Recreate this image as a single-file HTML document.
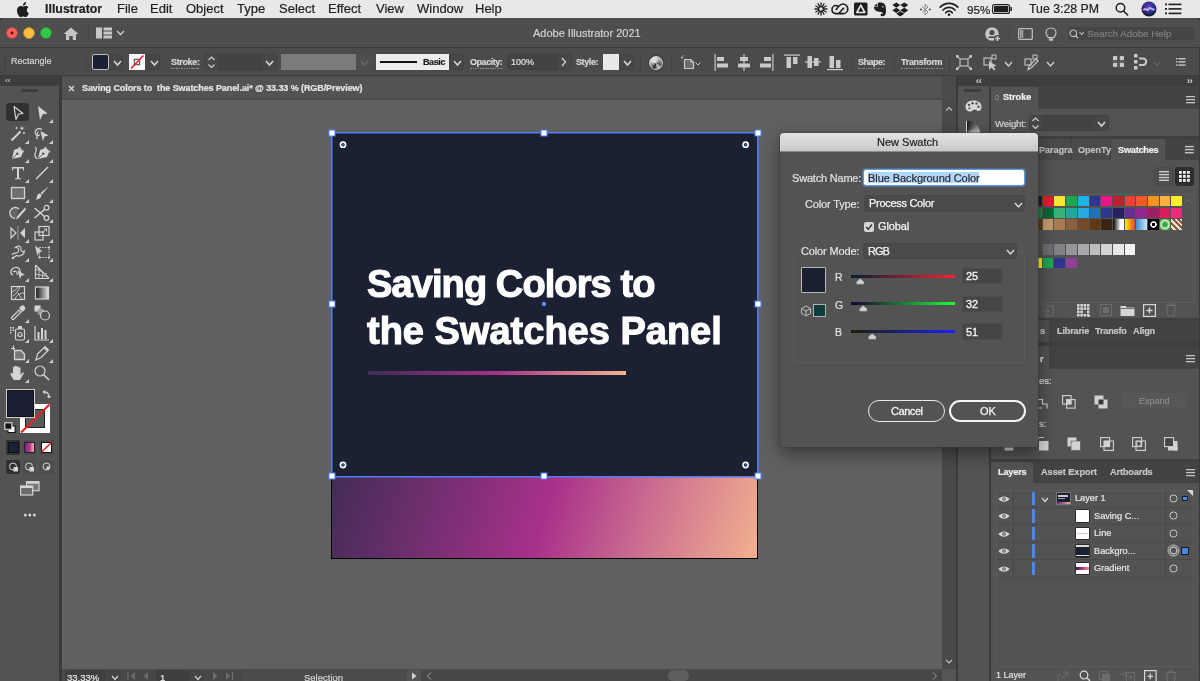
<!DOCTYPE html>
<html><head><meta charset="utf-8">
<style>
*{margin:0;padding:0;box-sizing:border-box}
html,body{width:1200px;height:681px;overflow:hidden;background:#3a3a3a;font-family:"Liberation Sans",sans-serif}
.a{position:absolute}
svg.a{overflow:visible}
.t{position:absolute;white-space:nowrap;line-height:1;will-change:transform;-webkit-text-stroke-width:0.2px}
</style></head><body>
<div class="a" style="left:0px;top:0px;width:1200px;height:18px;background:#e9e8e6;"></div>
<div class="a" style="left:0px;top:18px;width:1200px;height:29px;background:#4e4e4e;border-radius:5px 5px 0 0"></div>
<div class="a" style="left:0px;top:47px;width:1200px;height:1.5px;background:#3b3b3b;"></div>
<div class="a" style="left:0px;top:48px;width:1200px;height:28px;background:#4b4b4b;"></div>
<div class="a" style="left:0px;top:75px;width:1200px;height:1px;background:#3d3d3d;"></div>
<div class="a" style="left:0px;top:76px;width:59px;height:10px;background:#3e3e3e;"></div>
<div class="a" style="left:0px;top:86px;width:59px;height:595px;background:#535353;"></div>
<div class="a" style="left:62px;top:76px;width:894px;height:24px;background:#4b4b4b;"></div>
<div class="a" style="left:62px;top:77px;width:880px;height:21px;background:#535353;"></div>
<div class="a" style="left:62px;top:100px;width:880px;height:569px;background:#606060;"></div>
<div class="a" style="left:62px;top:100px;width:1px;height:569px;background:#676767;"></div>
<div class="a" style="left:942px;top:100px;width:14px;height:569px;background:#494949;"></div>
<div class="a" style="left:62px;top:669px;width:894px;height:12px;background:#4b4b4b;"></div>
<div class="a" style="left:958px;top:76px;width:242px;height:10px;background:#3e3e3e;"></div>
<div class="a" style="left:958px;top:86px;width:31px;height:595px;background:#535353;"></div>
<div class="a" style="left:991px;top:86px;width:209px;height:595px;background:#535353;"></div>
<div class="a" style="left:331px;top:132px;width:427px;height:427px;background:#000;"></div>
<div class="a" style="left:332px;top:133px;width:425px;height:344px;background:#1b2032;"></div>
<div class="a" style="left:332px;top:477px;width:425px;height:81px;background:linear-gradient(107deg,#432c58 0%,#7a2f74 28%,#a8318a 50%,#cf7390 75%,#f2b08f 100%);"></div>
<div class="t" style="left:367px;top:265px;font-size:38px;font-weight:bold;color:#fff;letter-spacing:-0.9px;-webkit-text-stroke:1.1px #fff">Saving Colors to</div>
<div class="t" style="left:367px;top:312px;font-size:38px;font-weight:bold;color:#fff;letter-spacing:0px;-webkit-text-stroke:1.1px #fff">the Swatches Panel</div>
<div class="a" style="left:368px;top:371px;width:258px;height:4px;background:linear-gradient(90deg,#3f2c55,#a8318a 50%,#f4b48e);"></div>
<svg class="a" style="left:320px;top:120px;" width="450" height="370" viewBox="0 0 450 370"><g fill="none" stroke="#4f7ff0" stroke-width="1.5"><rect x="11.75" y="12.75" width="426" height="344"/></g>
<g fill="#fff" stroke="#4f7ff0" stroke-width="1">
<rect x="9" y="10" width="6" height="6"/><rect x="221" y="10" width="6" height="6"/><rect x="435" y="10" width="6" height="6"/>
<rect x="9" y="181" width="6" height="6"/><rect x="435" y="181" width="6" height="6"/>
<rect x="9" y="353" width="6" height="6"/><rect x="221" y="353" width="6" height="6"/><rect x="435" y="353" width="6" height="6"/>
</g>
<g fill="#1b2032" stroke="#fff" stroke-width="1.6">
<circle cx="23" cy="24.7" r="2.6"/><circle cx="425.6" cy="24.7" r="2.6"/><circle cx="23" cy="345" r="2.6"/><circle cx="425.6" cy="345" r="2.6"/>
</g>
<g fill="#2f64f0"><circle cx="23" cy="24.7" r="1"/><circle cx="425.6" cy="24.7" r="1"/><circle cx="23" cy="345" r="1"/><circle cx="425.6" cy="345" r="1"/>
<circle cx="224" cy="184" r="2.2" fill="#5a8cf5"/></g></svg>
<svg class="a" style="left:17px;top:2px;" width="12" height="14" viewBox="0 0 12 14"><path fill="#1e1e1e" d="M8.3 2.6c.5-.7.9-1.6.8-2.5-.8 0-1.7.5-2.3 1.2-.5.6-.9 1.5-.8 2.4.9.1 1.8-.4 2.3-1.1zM9.1 3.9c-1.3-.1-2.3.7-2.9.7-.6 0-1.5-.7-2.5-.7C2.4 4 1.2 4.7.6 5.9c-1.3 2.3-.3 5.6.9 7.4.6.9 1.3 1.9 2.3 1.8.9 0 1.3-.6 2.4-.6s1.4.6 2.4.6 1.6-.9 2.2-1.8c.7-1 1-2 1-2.1 0 0-1.9-.8-2-3-.0-1.900 1.5-2.800 1.6-2.900-.9-1.300-2.300-1.500-2.8-1.5z"/></svg>
<div class="t" style="left:44.5px;top:2.90px;font-size:12.4px;color:#1e1e1e;font-weight:bold;">Illustrator</div>
<div class="t" style="left:117.2px;top:2.40px;font-size:13px;color:#1e1e1e;font-weight:normal;">File</div>
<div class="t" style="left:150.2px;top:2.40px;font-size:13px;color:#1e1e1e;font-weight:normal;">Edit</div>
<div class="t" style="left:186.2px;top:2.40px;font-size:13px;color:#1e1e1e;font-weight:normal;">Object</div>
<div class="t" style="left:237.2px;top:2.40px;font-size:13px;color:#1e1e1e;font-weight:normal;">Type</div>
<div class="t" style="left:279.2px;top:2.40px;font-size:13px;color:#1e1e1e;font-weight:normal;">Select</div>
<div class="t" style="left:328.2px;top:2.40px;font-size:13px;color:#1e1e1e;font-weight:normal;">Effect</div>
<div class="t" style="left:375.7px;top:2.40px;font-size:13px;color:#1e1e1e;font-weight:normal;">View</div>
<div class="t" style="left:417.2px;top:2.40px;font-size:13px;color:#1e1e1e;font-weight:normal;">Window</div>
<div class="t" style="left:475.2px;top:2.40px;font-size:13px;color:#1e1e1e;font-weight:normal;">Help</div>
<div class="t" style="left:966.5px;top:3.58px;font-size:11.6px;color:#1e1e1e;font-weight:normal;">95%</div>
<div class="t" style="left:1028.5px;top:2.99px;font-size:12.3px;color:#1e1e1e;font-weight:normal;">Tue 3:28 PM</div>
<svg class="a" style="left:813.5px;top:2px;" width="14" height="14" viewBox="0 0 14 14"><g stroke="#1e1e1e" stroke-width="1.3" stroke-linecap="round"><line x1="7" y1="7" x2="13.00" y2="7.00"/><line x1="7" y1="7" x2="12.20" y2="10.00"/><line x1="7" y1="7" x2="10.00" y2="12.20"/><line x1="7" y1="7" x2="7.00" y2="13.00"/><line x1="7" y1="7" x2="4.00" y2="12.20"/><line x1="7" y1="7" x2="1.80" y2="10.00"/><line x1="7" y1="7" x2="1.00" y2="7.00"/><line x1="7" y1="7" x2="1.80" y2="4.00"/><line x1="7" y1="7" x2="4.00" y2="1.80"/><line x1="7" y1="7" x2="7.00" y2="1.00"/><line x1="7" y1="7" x2="10.00" y2="1.80"/><line x1="7" y1="7" x2="12.20" y2="4.00"/></g><circle cx="7" cy="7" r="3" fill="#1e1e1e"/><circle cx="7" cy="7" r="1.8" fill="#e9e8e6"/></svg>
<svg class="a" style="left:831px;top:2px;" width="18" height="14" viewBox="0 0 18 14"><g fill="none" stroke="#1e1e1e" stroke-width="1.6"><path d="M7.2 4.2 C6.6 3.8 5.9 3.5 5 3.5 C2.7 3.5 1 5.3 1 7.6 C1 9.9 2.7 11.6 5 11.6 L12 11.6 C14.7 11.6 16.8 9.6 16.8 6.9 C16.8 4.2 14.6 2 12 2 C10 2 8.7 3.2 7.5 4.6 L4.8 8"/><path d="M7.8 11.5 L11.5 7.2 C12.1 6.6 12.6 6.2 13.3 6.5"/></g></svg>
<svg class="a" style="left:854px;top:2px;" width="14" height="14" viewBox="0 0 14 14"><rect x="0" y="0.5" width="13.5" height="13" rx="1.5" fill="#1e1e1e"/><path d="M6.8 3.2 L10.8 10.5 L2.8 10.5 Z" fill="none" stroke="#e9e8e6" stroke-width="1.6" stroke-linejoin="round"/></svg>
<svg class="a" style="left:873px;top:2px;" width="14" height="15" viewBox="0 0 14 15"><path fill="#1e1e1e" d="M4.2 1.2 L1 4.2 L4.2 4.2Z M5 0.8 C7 0.2 10.5 0.5 11.8 2.5 C13 4.5 13.3 8.5 12.8 11 C12.4 13.2 11 14.5 9.3 14.3 C7.8 14.1 7.3 12.8 7.8 11.9 C8.3 11.1 9.5 11.3 9.9 12 C10.1 10.8 9.4 10.1 8 10 C5.5 9.8 3.2 9.4 1.8 7.8 C1 6.8 1 5.2 1.2 4.8 L4.8 4.8Z"/><circle cx="9.8" cy="4.8" r="0.8" fill="#e9e8e6"/></svg>
<svg class="a" style="left:892px;top:2px;" width="17" height="15" viewBox="0 0 17 15"><g fill="#1e1e1e"><path d="M4.3 0.5 L0.3 3.1 L4.3 5.7 L8.3 3.1Z"/><path d="M12.3 0.5 L8.3 3.1 L12.3 5.7 L16.3 3.1Z"/><path d="M0.3 8.3 L4.3 5.7 L8.3 8.3 L4.3 10.9Z"/><path d="M16.3 8.3 L12.3 5.7 L8.3 8.3 L12.3 10.9Z"/><path d="M4.3 11.8 L8.3 9.2 L12.3 11.8 L8.3 14.4Z"/></g></svg>
<svg class="a" style="left:920px;top:3px;" width="11" height="13" viewBox="0 0 11 13"><path d="M2 3.5 L8 9 L5 12 L5 1 L8 4 L2 9.5" fill="none" stroke="#8a8a8a" stroke-width="1"/><circle cx="1" cy="6.5" r=".9" fill="#333"/><circle cx="9.8" cy="6.5" r=".9" fill="#333"/></svg>
<svg class="a" style="left:939px;top:2px;" width="20" height="14" viewBox="0 0 20 14"><g fill="none" stroke="#1e1e1e" stroke-width="1.7" stroke-linecap="round"><path d="M1.2 5.2 A12 12 0 0 1 18.8 5.2"/><path d="M4 8 A8 8 0 0 1 16 8"/><path d="M6.8 10.8 A4 4 0 0 1 13.2 10.8"/></g><circle cx="10" cy="12.8" r="1.3" fill="#1e1e1e"/></svg>
<svg class="a" style="left:992px;top:4px;" width="21" height="10" viewBox="0 0 21 10"><rect x="0.6" y="0.6" width="17" height="8.8" rx="2" fill="none" stroke="#1e1e1e" stroke-width="1.1"/><rect x="2" y="2" width="14.3" height="6" rx=".8" fill="#1e1e1e"/><rect x="18.4" y="3" width="1.5" height="4" rx=".6" fill="#1e1e1e"/></svg>
<svg class="a" style="left:1115px;top:2px;" width="14" height="14" viewBox="0 0 14 14"><circle cx="5.5" cy="5.8" r="4.3" fill="none" stroke="#1e1e1e" stroke-width="1.5"/><line x1="8.6" y1="9" x2="12.6" y2="13" stroke="#1e1e1e" stroke-width="1.6" stroke-linecap="round"/></svg>
<svg class="a" style="left:1141px;top:1px;" width="16" height="16" viewBox="0 0 16 16"><defs><radialGradient id="sg" cx="50%" cy="40%" r="60%"><stop offset="0" stop-color="#7a3fd0"/><stop offset=".6" stop-color="#2c2f8a"/><stop offset="1" stop-color="#111"/></radialGradient></defs><circle cx="8" cy="8" r="7.5" fill="url(#sg)"/><path d="M2.5 9 C5 6 6.5 11 8 8 C9.5 5 11 10 13.5 8" fill="none" stroke="#e8e8ff" stroke-width="1.4"/><path d="M3 10 C5.5 4 8 10 8.5 7" fill="none" stroke="#ee55bb" stroke-width="1"/><path d="M7.5 8 C10 4 11 10 13 9" fill="none" stroke="#40d0ff" stroke-width="1"/></svg>
<svg class="a" style="left:1165px;top:3px;" width="17" height="12" viewBox="0 0 17 12"><g fill="#1e1e1e"><rect x="0" y="0.5" width="2" height="1.8"/><rect x="0" y="5" width="2" height="1.8"/><rect x="0" y="9.5" width="2" height="1.8"/><rect x="3.5" y="0.6" width="13" height="1.6"/><rect x="3.5" y="5.1" width="13" height="1.6"/><rect x="3.5" y="9.6" width="13" height="1.6"/></g></svg>
<svg class="a" style="left:6px;top:27px;" width="48" height="12" viewBox="0 0 48 12"><circle cx="6" cy="6" r="5.4" fill="#fc605c" stroke="#d9463f" stroke-width=".6"/><circle cx="6" cy="6" r="1.4" fill="#4d0000"/><circle cx="23" cy="6" r="5.4" fill="#fdbc40" stroke="#dea034" stroke-width=".6"/><circle cx="40" cy="6" r="5.4" fill="#34c84a" stroke="#27aa35" stroke-width=".6"/></svg>
<svg class="a" style="left:63px;top:27px;" width="16" height="14" viewBox="0 0 16 14"><path d="M8 0.5 L15.5 7 L13 7 L13 13 L9.8 13 L9.8 9 L6.2 9 L6.2 13 L3 13 L3 7 L0.5 7 Z" fill="#c5c5c5"/></svg>
<div class="a" style="left:88px;top:24px;width:1px;height:18px;background:#424242;"></div>
<svg class="a" style="left:96px;top:27px;" width="20" height="12" viewBox="0 0 20 12"><rect x="0" y="0.5" width="6" height="11" fill="#c8c8c8"/><rect x="7.5" y="0.5" width="8.5" height="3" fill="#c8c8c8"/><rect x="7.5" y="4.5" width="8.5" height="3" fill="#c8c8c8"/><rect x="7.5" y="8.5" width="8.5" height="3" fill="#c8c8c8"/></svg>
<svg class="a" style="left:116px;top:30px;" width="9" height="6" viewBox="0 0 9 6"><path d="M1 1 L4.5 4.5 L8 1" fill="none" stroke="#d0d0d0" stroke-width="1.4"/></svg>
<div class="t" style="left:532.5px;top:28.29px;font-size:11px;color:#d2d2d2;font-weight:normal;">Adobe Illustrator 2021</div>
<svg class="a" style="left:985px;top:27px;" width="17" height="15" viewBox="0 0 17 15"><circle cx="7" cy="7" r="6.8" fill="#c6c6c6"/><circle cx="7" cy="5.5" r="2.6" fill="#4b4b4b"/><path d="M2.8 11 C3.5 8.5 10.5 8.5 11.2 11" fill="#4b4b4b"/><circle cx="12.5" cy="11.5" r="3.5" fill="#4b4b4b"/><path d="M12.5 9 V14 M10 11.5 H15" stroke="#c6c6c6" stroke-width="1.5"/></svg>
<div class="a" style="left:1009px;top:26px;width:1px;height:16px;background:#444;"></div>
<svg class="a" style="left:1018px;top:28px;" width="15" height="12" viewBox="0 0 15 12"><rect x="0.7" y="0.7" width="13.6" height="10.6" rx="1" fill="none" stroke="#bdbdbd" stroke-width="1.3"/><rect x="2" y="2" width="3.3" height="8" fill="#9a9a9a"/></svg>
<svg class="a" style="left:1045px;top:27px;" width="12" height="15" viewBox="0 0 12 15"><path d="M6 1 C2.8 1 1 3.3 1 5.8 C1 8 2.6 9.2 3.3 10.6 L8.7 10.6 C9.4 9.2 11 8 11 5.8 C11 3.3 9.2 1 6 1Z" fill="none" stroke="#c8c8c8" stroke-width="1.2"/><rect x="3.8" y="11.6" width="4.4" height="2.2" rx=".8" fill="#c8c8c8"/></svg>
<div class="a" style="left:1067px;top:26px;width:129px;height:15px;background:#454545;border-radius:3px;border:1px solid #4f4f4f"></div>
<svg class="a" style="left:1069px;top:29px;" width="17" height="10" viewBox="0 0 17 10"><circle cx="4.3" cy="4.3" r="3.3" fill="none" stroke="#bbb" stroke-width="1.2"/><line x1="6.7" y1="6.8" x2="9" y2="9.2" stroke="#bbb" stroke-width="1.3"/><path d="M10.5 3.2 L12.7 5.4 L14.9 3.2" fill="none" stroke="#bbb" stroke-width="1.1"/></svg>
<div class="t" style="left:1086.5px;top:28.90px;font-size:9.8px;color:#808080;font-weight:normal;">Search Adobe Help</div>
<div class="a" style="left:4px;top:54px;width:2px;height:16px;background:#444;"></div>
<div class="t" style="left:11.3px;top:57.48px;font-size:9px;color:#d4d4d4;font-weight:normal;">Rectangle</div>
<div class="a" style="left:86px;top:52px;width:1px;height:20px;background:#444;"></div>
<div class="a" style="left:92px;top:54px;width:31px;height:16px;background:#474747;border:1px solid #414141;border-radius:3px"></div>
<div class="a" style="left:92px;top:54px;width:17px;height:16px;background:#1b2034;border:1.5px solid #c0c0c0;border-radius:2px"></div>
<svg class="a" style="left:112.5px;top:60px;" width="9" height="6" viewBox="0 0 9 6"><path d="M1 1 L4.5 5 L8 1" fill="none" stroke="#d8d8d8" stroke-width="1.5"/></svg>
<div class="a" style="left:129px;top:54px;width:31px;height:16px;background:#474747;border:1px solid #414141;border-radius:3px"></div>
<div class="a" style="left:129px;top:54px;width:16px;height:16px;background:#fafafa;"></div>
<svg class="a" style="left:129px;top:54px;" width="16" height="16" viewBox="0 0 16 16"><rect x="5.3" y="5.3" width="5.4" height="5.4" fill="none" stroke="#444" stroke-width="1"/><line x1="2" y1="14.5" x2="14.5" y2="1.5" stroke="#ee1c24" stroke-width="1.6"/></svg>
<svg class="a" style="left:149.5px;top:60px;" width="9" height="6" viewBox="0 0 9 6"><path d="M1 1 L4.5 5 L8 1" fill="none" stroke="#d8d8d8" stroke-width="1.5"/></svg>
<div class="t" style="left:171px;top:58.18px;font-size:9px;color:#d6d6d6;font-weight:bold;letter-spacing:-0.35px">Stroke:</div>
<div class="a" style="left:171px;top:68px;width:28px;height:1px;background:repeating-linear-gradient(90deg,#8a8a8a 0 1.5px,transparent 1.5px 2.5px);"></div>
<div class="a" style="left:204px;top:54px;width:73px;height:16px;background:#474747;border:1px solid #414141;border-radius:3px"></div>
<div class="a" style="left:219px;top:54px;width:1px;height:16px;background:#404040;"></div>
<div class="a" style="left:220px;top:55px;width:41px;height:14px;background:#434343;"></div>
<div class="a" style="left:261px;top:54px;width:1px;height:16px;background:#404040;"></div>
<svg class="a" style="left:207px;top:56px;" width="10" height="13" viewBox="0 0 10 13"><path d="M1.5 4 L4.5 1 L7.5 4 M1.5 8.5 L4.5 11.5 L7.5 8.5" fill="none" stroke="#d0d0d0" stroke-width="1.2"/></svg>
<svg class="a" style="left:264.5px;top:60px;" width="9" height="6" viewBox="0 0 9 6"><path d="M1 1 L4.5 5 L8 1" fill="none" stroke="#d8d8d8" stroke-width="1.5"/></svg>
<div class="a" style="left:281px;top:54px;width:75px;height:16px;background:#7b7b7b;"></div>
<div class="a" style="left:356px;top:54px;width:15px;height:16px;background:#4e4e4e;"></div>
<svg class="a" style="left:359.5px;top:60px;" width="9" height="6" viewBox="0 0 9 6"><path d="M1 1 L4.5 5 L8 1" fill="none" stroke="#6a6a6a" stroke-width="1.5"/></svg>
<div class="a" style="left:376px;top:54px;width:73px;height:16px;background:#ececec;"></div>
<div class="a" style="left:380px;top:61px;width:37px;height:2px;background:#111;"></div>
<div class="t" style="left:423px;top:58.18px;font-size:9px;color:#1a1a1a;font-weight:bold;letter-spacing:-0.4px">Basic</div>
<div class="a" style="left:449px;top:54px;width:15px;height:16px;background:#474747;border:1px solid #414141;border-radius:3px"></div>
<svg class="a" style="left:452.5px;top:60px;" width="9" height="6" viewBox="0 0 9 6"><path d="M1 1 L4.5 5 L8 1" fill="none" stroke="#d8d8d8" stroke-width="1.5"/></svg>
<div class="t" style="left:470px;top:58.18px;font-size:9px;color:#d6d6d6;font-weight:bold;letter-spacing:-0.45px">Opacity:</div>
<div class="a" style="left:470px;top:68px;width:32.5px;height:1px;background:repeating-linear-gradient(90deg,#8a8a8a 0 1.5px,transparent 1.5px 2.5px);"></div>
<div class="a" style="left:507px;top:54px;width:65px;height:16px;background:#474747;border:1px solid #414141;border-radius:3px"></div>
<div class="a" style="left:508px;top:55px;width:48px;height:14px;background:#434343;"></div>
<div class="a" style="left:556px;top:54px;width:1px;height:16px;background:#404040;"></div>
<svg class="a" style="left:561px;top:57px;" width="6" height="10" viewBox="0 0 6 10"><path d="M1 1 L4.5 5 L1 9" fill="none" stroke="#d0d0d0" stroke-width="1.3"/></svg>
<div class="t" style="left:510.5px;top:57.98px;font-size:9px;color:#e0e0e0;font-weight:normal;">100%</div>
<div class="t" style="left:576px;top:58.18px;font-size:9px;color:#d6d6d6;font-weight:bold;letter-spacing:-0.4px">Style:</div>
<div class="a" style="left:603px;top:54px;width:31px;height:16px;background:#474747;border:1px solid #414141;border-radius:3px"></div>
<div class="a" style="left:603px;top:54px;width:16px;height:16px;background:#e9e9e9;"></div>
<svg class="a" style="left:622.5px;top:60px;" width="9" height="6" viewBox="0 0 9 6"><path d="M1 1 L4.5 5 L8 1" fill="none" stroke="#d8d8d8" stroke-width="1.5"/></svg>
<div class="a" style="left:640px;top:52px;width:1px;height:20px;background:#434343;"></div>
<div class="a" style="left:648.5px;top:55.5px;width:14px;height:14px;background:conic-gradient(#d8d8d8,#9a9a9a 60deg,#555 110deg,#cfcfcf 150deg,#222 200deg,#888 240deg,#e0e0e0 300deg,#d8d8d8);border-radius:50%;border:1px solid #d0d0d0;box-shadow:0 0 0 1px #3a3a3a"></div>
<div class="a" style="left:671px;top:52px;width:1px;height:20px;background:#434343;"></div>
<svg class="a" style="left:680px;top:55px;" width="24" height="17" viewBox="0 0 24 17"><path d="M4.5 4.5 H10.5 L13.5 7.5 V13.5 H4.5 Z" fill="#6a6a6a" stroke="#c8c8c8" stroke-width="1.2" stroke-linejoin="round"/><path d="M10.5 4.5 V7.5 H13.5" fill="#c8c8c8"/><circle cx="2" cy="2.5" r=".9" fill="#c8c8c8"/><circle cx="3.5" cy="0.8" r=".6" fill="#c8c8c8"/><path d="M15.5 7.5 L18 10 L20.5 7.5" fill="none" stroke="#c8c8c8" stroke-width="1"/></svg>
<svg class="a" style="left:714px;top:54px;" width="16" height="17" viewBox="0 0 16 17"><rect x="0.5" y="0" width="1.2" height="17" fill="#c9c9c9"/><rect x="3" y="3" width="7" height="4" fill="#c9c9c9"/><rect x="3" y="9.5" width="11" height="4" fill="#c9c9c9"/></svg>
<svg class="a" style="left:737px;top:54px;" width="14" height="17" viewBox="0 0 14 17"><rect x="6.4" y="0" width="1.2" height="17" fill="#c9c9c9"/><rect x="3" y="3" width="8" height="4" fill="#c9c9c9"/><rect x="1" y="9.5" width="12" height="4" fill="#c9c9c9"/></svg>
<svg class="a" style="left:759px;top:54px;" width="15" height="17" viewBox="0 0 15 17"><rect x="13.3" y="0" width="1.2" height="17" fill="#c9c9c9"/><rect x="5" y="3" width="7" height="4" fill="#c9c9c9"/><rect x="1" y="9.5" width="11" height="4" fill="#c9c9c9"/></svg>
<svg class="a" style="left:784px;top:54px;" width="16" height="16" viewBox="0 0 16 16"><rect x="0" y="0.5" width="16" height="1.2" fill="#c9c9c9"/><rect x="2.5" y="3" width="4.5" height="11" fill="#c9c9c9"/><rect x="9" y="3" width="4.5" height="7" fill="#c9c9c9"/></svg>
<svg class="a" style="left:805px;top:54px;" width="16" height="16" viewBox="0 0 16 16"><rect x="0" y="7.4" width="16" height="1.2" fill="#c9c9c9"/><rect x="2.5" y="2" width="4.5" height="12" fill="#c9c9c9"/><rect x="9" y="4" width="4.5" height="8" fill="#c9c9c9"/></svg>
<svg class="a" style="left:827px;top:54px;" width="16" height="17" viewBox="0 0 16 17"><rect x="0" y="15" width="16" height="1.2" fill="#c9c9c9"/><rect x="2.5" y="2" width="4.5" height="12" fill="#c9c9c9"/><rect x="9" y="6" width="4.5" height="8" fill="#c9c9c9"/></svg>
<div class="a" style="left:851px;top:52px;width:1px;height:20px;background:#434343;"></div>
<div class="t" style="left:857.5px;top:58.18px;font-size:9px;color:#d6d6d6;font-weight:bold;letter-spacing:-0.5px">Shape:</div>
<div class="a" style="left:857.5px;top:68px;width:26.5px;height:1px;background:repeating-linear-gradient(90deg,#8a8a8a 0 1.5px,transparent 1.5px 2.5px);"></div>
<div class="a" style="left:894px;top:52px;width:1px;height:20px;background:#434343;"></div>
<div class="t" style="left:901px;top:58.18px;font-size:9px;color:#d6d6d6;font-weight:bold;letter-spacing:-0.3px">Transform</div>
<div class="a" style="left:901px;top:68px;width:41.5px;height:1px;background:repeating-linear-gradient(90deg,#8a8a8a 0 1.5px,transparent 1.5px 2.5px);"></div>
<div class="a" style="left:949px;top:52px;width:1px;height:20px;background:#434343;"></div>
<svg class="a" style="left:956px;top:55px;" width="16" height="15" viewBox="0 0 16 15"><rect x="4" y="4" width="8" height="7" fill="none" stroke="#c9c9c9" stroke-width="1.1"/><g stroke="#c9c9c9" stroke-width="1.1"><path d="M0.5 0.5 L3.5 3.5 M15.5 0.5 L12.5 3.5 M0.5 14.5 L3.5 11.5 M15.5 14.5 L12.5 11.5"/></g><g fill="#c9c9c9"><rect x="0" y="0" width="2.5" height="2.5"/><rect x="13.5" y="0" width="2.5" height="2.5"/><rect x="0" y="12.5" width="2.5" height="2.5"/><rect x="13.5" y="12.5" width="2.5" height="2.5"/></g></svg>
<svg class="a" style="left:983px;top:54px;" width="14" height="17" viewBox="0 0 14 17"><rect x="1" y="4" width="7" height="7" fill="none" stroke="#c9c9c9" stroke-width="1.1"/><path d="M6 7 L6 16 L8.5 13.5 L11 16.5 L12.5 15.5 L10.3 12.5 L13.5 12 Z" fill="#c9c9c9"/><rect x="9" y="1" width="4" height="4" fill="none" stroke="#c9c9c9" stroke-width="1"/></svg>
<svg class="a" style="left:1003.5px;top:61px;" width="9" height="6" viewBox="0 0 9 6"><path d="M1 1 L4.5 5 L8 1" fill="none" stroke="#d0d0d0" stroke-width="1.3"/></svg>
<div class="a" style="left:1015px;top:52px;width:1px;height:20px;background:#434343;"></div>
<svg class="a" style="left:1024px;top:54px;" width="15" height="17" viewBox="0 0 15 17"><rect x="1" y="5" width="6" height="6" fill="none" stroke="#c9c9c9" stroke-width="1.1"/><rect x="9" y="1" width="4" height="4" fill="none" stroke="#c9c9c9" stroke-width="1"/><path d="M4 15.5 L5 12 L12 5 L14 7 L7 14 Z" fill="none" stroke="#c9c9c9" stroke-width="1.2"/></svg>
<svg class="a" style="left:1045.5px;top:61px;" width="9" height="6" viewBox="0 0 9 6"><path d="M1 1 L4.5 5 L8 1" fill="none" stroke="#d0d0d0" stroke-width="1.3"/></svg>
<svg class="a" style="left:1112px;top:55px;" width="13" height="13" viewBox="0 0 13 13"><g fill="#c9c9c9"><rect x="1" y="1" width="4.2" height="4.2" rx=".8"/><rect x="7.8" y="1" width="4.2" height="4.2" rx=".8"/><rect x="1" y="7.8" width="4.2" height="4.2" rx=".8"/><rect x="7.8" y="7.8" width="4.2" height="4.2" rx=".8"/></g><path d="M6.5 0 V13 M0 6.5 H13" stroke="#888" stroke-width=".6" stroke-dasharray="1 1"/></svg>
<svg class="a" style="left:1134px;top:54px;" width="14" height="16" viewBox="0 0 14 16"><g fill="#c9c9c9"><rect x="0" y="0" width="3.5" height="3.5"/><rect x="0" y="6" width="3.5" height="3.5"/><rect x="0" y="12" width="3.5" height="3.5"/></g><path d="M5 4.5 L9 4.5 A3.2 3.2 0 0 1 9 10.9 L5 10.9" fill="none" stroke="#c9c9c9" stroke-width="2"/></svg>
<svg class="a" style="left:1153px;top:61px;" width="8" height="5.5" viewBox="0 0 8 5.5"><path d="M1 1 L4.0 4.5 L7 1" fill="none" stroke="#6a6a6a" stroke-width="1.1"/></svg>
<svg class="a" style="left:1175.5px;top:57.5px;" width="10" height="8" viewBox="0 0 10 8"><g fill="#c9c9c9"><rect x="0" y="0" width="1.5" height="1.4"/><rect x="0" y="3.2" width="1.5" height="1.4"/><rect x="0" y="6.4" width="1.5" height="1.4"/><rect x="2.5" y="0" width="7" height="1.4"/><rect x="2.5" y="3.2" width="7" height="1.4"/><rect x="2.5" y="6.4" width="7" height="1.4"/></g></svg>
<div class="a" style="left:21px;top:89px;width:17px;height:3px;background:#3c3c3c;"></div>
<div class="a" style="left:6px;top:103px;width:23px;height:18px;background:#303030;border-radius:3px"></div>
<svg class="a" style="left:8.5px;top:103.5px;" width="18" height="18" viewBox="0 0 18 18"><path d="M5 2.5 L14 9.5 L9.5 10 L7 15.5 Z" fill="none" stroke="#d4d4d4" stroke-width="1.2" stroke-linejoin="round"/></svg>
<svg class="a" style="left:33px;top:103.5px;" width="18" height="18" viewBox="0 0 18 18"><path d="M5 2 L14.5 9.5 L9.8 10.3 L7 16 Z" fill="#d4d4d4"/></svg>
<svg class="a" style="left:49px;top:118.5px;" width="4" height="4" viewBox="0 0 4 4"><path d="M4 0 L4 4 L0 4Z" fill="#cfcfcf"/></svg>
<svg class="a" style="left:8.5px;top:124.5px;" width="18" height="18" viewBox="0 0 18 18"><line x1="2.5" y1="15.5" x2="11.5" y2="6.5" stroke="#d4d4d4" stroke-width="2"/><g stroke="#d4d4d4" stroke-width="1"><path d="M13 1.5 V5 M11.2 3.2 H14.8 M7.5 2 V4 M6.5 3 H8.5 M15 7 V9 M14 8 H16"/></g></svg>
<svg class="a" style="left:24.5px;top:139.5px;" width="4" height="4" viewBox="0 0 4 4"><path d="M4 0 L4 4 L0 4Z" fill="#cfcfcf"/></svg>
<svg class="a" style="left:33px;top:124.5px;" width="18" height="18" viewBox="0 0 18 18"><path d="M9 4.5 C5 2 1.5 5 2.5 8.5 C3.3 11 6 11 7 9.5" fill="none" stroke="#d4d4d4" stroke-width="1.2"/><path d="M7.5 6 L15.5 10.5 L11.5 11.5 L10 16 Z" fill="#d4d4d4"/><path d="M5.5 6.5 C3 7.5 5.5 12 3.5 14" fill="none" stroke="#d4d4d4" stroke-width="1.2" stroke-width="1"/></svg>
<svg class="a" style="left:49px;top:139.5px;" width="4" height="4" viewBox="0 0 4 4"><path d="M4 0 L4 4 L0 4Z" fill="#cfcfcf"/></svg>
<svg class="a" style="left:8.5px;top:144px;" width="18" height="18" viewBox="0 0 18 18"><path d="M10.5 2.5 L15.5 7.5 L13.5 9 L12 13 L3 15 L5 6 L9 4.5 Z" fill="#d4d4d4"/><circle cx="8.2" cy="9.8" r="1.2" fill="#535353"/><line x1="3.5" y1="14.5" x2="7.5" y2="10.5" stroke="#535353" stroke-width=".8"/><path d="M10.8 3.5 L14.5 7.2" stroke="#535353" stroke-width=".8"/></svg>
<svg class="a" style="left:24.5px;top:159px;" width="4" height="4" viewBox="0 0 4 4"><path d="M4 0 L4 4 L0 4Z" fill="#cfcfcf"/></svg>
<svg class="a" style="left:33px;top:144px;" width="18" height="18" viewBox="0 0 18 18"><g transform="translate(2,0)"><path d="M10.5 2.5 L15.5 7.5 L13.5 9 L12 13 L3 15 L5 6 L9 4.5 Z" fill="#d4d4d4"/><circle cx="8.2" cy="9.8" r="1.2" fill="#535353"/><line x1="3.5" y1="14.5" x2="7.5" y2="10.5" stroke="#535353" stroke-width=".8"/><path d="M10.8 3.5 L14.5 7.2" stroke="#535353" stroke-width=".8"/></g><path d="M4.5 15 C1 13 2 9 3 7 C4 5 2.5 3 1.5 3" fill="none" stroke="#d4d4d4" stroke-width="1.2" stroke-width="1"/></svg>
<svg class="a" style="left:49px;top:159px;" width="4" height="4" viewBox="0 0 4 4"><path d="M4 0 L4 4 L0 4Z" fill="#cfcfcf"/></svg>
<svg class="a" style="left:8.5px;top:163.7px;" width="18" height="18" viewBox="0 0 18 18"><path d="M3 3 H15 V6.5 H14 V4.5 H10 V14.2 H12 V15.3 H6 V14.2 H8 V4.5 H4 V6.5 H3 Z" fill="#d4d4d4"/></svg>
<svg class="a" style="left:24.5px;top:178.7px;" width="4" height="4" viewBox="0 0 4 4"><path d="M4 0 L4 4 L0 4Z" fill="#cfcfcf"/></svg>
<svg class="a" style="left:33px;top:163.7px;" width="18" height="18" viewBox="0 0 18 18"><line x1="3" y1="15" x2="15" y2="3" stroke="#d4d4d4" stroke-width="1.4"/></svg>
<svg class="a" style="left:49px;top:178.7px;" width="4" height="4" viewBox="0 0 4 4"><path d="M4 0 L4 4 L0 4Z" fill="#cfcfcf"/></svg>
<svg class="a" style="left:8.5px;top:183.6px;" width="18" height="18" viewBox="0 0 18 18"><rect x="2.5" y="3.5" width="13" height="11" fill="#6f6f6f" stroke="#d4d4d4" stroke-width="1.3"/></svg>
<svg class="a" style="left:24.5px;top:198.6px;" width="4" height="4" viewBox="0 0 4 4"><path d="M4 0 L4 4 L0 4Z" fill="#cfcfcf"/></svg>
<svg class="a" style="left:33px;top:183.6px;" width="18" height="18" viewBox="0 0 18 18"><path d="M15.5 2.5 L9 10.5 L7.5 9 Z" fill="#d4d4d4"/><path d="M7 9.5 C4.5 9.5 4 12 3.5 14.5 L2.5 15.5 C5.5 15.5 8.5 14 8.5 11 Z" fill="#d4d4d4"/></svg>
<svg class="a" style="left:49px;top:198.6px;" width="4" height="4" viewBox="0 0 4 4"><path d="M4 0 L4 4 L0 4Z" fill="#cfcfcf"/></svg>
<svg class="a" style="left:8.5px;top:203.8px;" width="18" height="18" viewBox="0 0 18 18"><path d="M10 5 A5.5 5.5 0 1 0 6 14.5" fill="#666" stroke="#d4d4d4" stroke-width="1.3"/><path d="M16 3.5 L8 12.5 L6.8 15.5 L9.5 14 L17 5.5 Z" fill="#d4d4d4"/></svg>
<svg class="a" style="left:24.5px;top:218.8px;" width="4" height="4" viewBox="0 0 4 4"><path d="M4 0 L4 4 L0 4Z" fill="#cfcfcf"/></svg>
<svg class="a" style="left:33px;top:203.8px;" width="18" height="18" viewBox="0 0 18 18"><circle cx="13.5" cy="3.8" r="2.4" fill="none" stroke="#d4d4d4" stroke-width="1.2"/><circle cx="13.5" cy="14" r="2.4" fill="none" stroke="#d4d4d4" stroke-width="1.2"/><path d="M1.5 4 L11.5 12.5 M1.5 14 L11.5 5.5" stroke="#d4d4d4" stroke-width="1.5"/></svg>
<svg class="a" style="left:49px;top:218.8px;" width="4" height="4" viewBox="0 0 4 4"><path d="M4 0 L4 4 L0 4Z" fill="#cfcfcf"/></svg>
<svg class="a" style="left:8.5px;top:223.6px;" width="18" height="18" viewBox="0 0 18 18"><path d="M2 4 L7 9 L2 14 Z" fill="none" stroke="#d4d4d4" stroke-width="1.2"/><path d="M16 4 L11 9 L16 14 Z" fill="#d4d4d4"/><line x1="9" y1="2" x2="9" y2="16" stroke="#9a9a9a" stroke-width="1"/></svg>
<svg class="a" style="left:24.5px;top:238.6px;" width="4" height="4" viewBox="0 0 4 4"><path d="M4 0 L4 4 L0 4Z" fill="#cfcfcf"/></svg>
<svg class="a" style="left:33px;top:223.6px;" width="18" height="18" viewBox="0 0 18 18"><rect x="2" y="8" width="8" height="8" fill="none" stroke="#d4d4d4" stroke-width="1.2"/><rect x="6" y="2.5" width="10" height="9" fill="none" stroke="#d4d4d4" stroke-width="1.2"/><path d="M9 9 L13.5 5 M11 5 H13.5 V7.5" stroke="#d4d4d4" stroke-width="1"/></svg>
<svg class="a" style="left:49px;top:238.6px;" width="4" height="4" viewBox="0 0 4 4"><path d="M4 0 L4 4 L0 4Z" fill="#cfcfcf"/></svg>
<svg class="a" style="left:8.5px;top:243.4px;" width="18" height="18" viewBox="0 0 18 18"><path d="M3 12 C5 8 7 12 9 9 C10.5 7 9 4 6.5 4.5 C9 2 12 3 12 6 C12 9 14 9 15.5 8 C15 12 11 14 7.5 12.5 L4 15" fill="none" stroke="#d4d4d4" stroke-width="1.2" stroke-width="1.4"/><circle cx="4" cy="15" r="1.2" fill="#d4d4d4"/></svg>
<svg class="a" style="left:24.5px;top:258.4px;" width="4" height="4" viewBox="0 0 4 4"><path d="M4 0 L4 4 L0 4Z" fill="#cfcfcf"/></svg>
<svg class="a" style="left:33px;top:243.4px;" width="18" height="18" viewBox="0 0 18 18"><path d="M2 2.5 L9.5 8.5 L6 9 L4.5 13 Z" fill="#d4d4d4"/><rect x="6.5" y="4.5" width="9.5" height="10" fill="none" stroke="#d4d4d4" stroke-width="1" stroke-dasharray="1.5 1.2"/><g fill="#d4d4d4"><rect x="15" y="3.5" width="2" height="2"/><rect x="15" y="13.5" width="2" height="2"/><rect x="5.5" y="13.5" width="2" height="2"/></g></svg>
<svg class="a" style="left:49px;top:258.4px;" width="4" height="4" viewBox="0 0 4 4"><path d="M4 0 L4 4 L0 4Z" fill="#cfcfcf"/></svg>
<svg class="a" style="left:8.5px;top:263.2px;" width="18" height="18" viewBox="0 0 18 18"><path d="M4 12 C0.5 11 1.5 5 6 4.5 C9 4 12 6 11 9" fill="none" stroke="#d4d4d4" stroke-width="1.2"/><path d="M4 9 C6 7 9 9 8 12" fill="none" stroke="#d4d4d4" stroke-width="1.2" stroke-width=".8"/><path d="M8.5 7 L16 12 L12.5 12.5 L11 16 Z" fill="#d4d4d4"/></svg>
<svg class="a" style="left:24.5px;top:278.2px;" width="4" height="4" viewBox="0 0 4 4"><path d="M4 0 L4 4 L0 4Z" fill="#cfcfcf"/></svg>
<svg class="a" style="left:33px;top:263.2px;" width="18" height="18" viewBox="0 0 18 18"><path d="M2.5 2 V15.5 H16 M2.5 2 L16 15.5" fill="none" stroke="#d4d4d4" stroke-width="1.2" stroke-width="1"/><path d="M2.5 6 L9 8.5 M2.5 11 L12 13 M6 5 V15.5 M9.5 9 V15.5" stroke="#d4d4d4" stroke-width=".8"/><path d="M9 10.5 H14 M11 13 H15" stroke="#aaa" stroke-width="1"/></svg>
<svg class="a" style="left:49px;top:278.2px;" width="4" height="4" viewBox="0 0 4 4"><path d="M4 0 L4 4 L0 4Z" fill="#cfcfcf"/></svg>
<svg class="a" style="left:8.5px;top:283.6px;" width="18" height="18" viewBox="0 0 18 18"><rect x="2.5" y="2.5" width="13" height="13" fill="none" stroke="#d4d4d4" stroke-width="1.2" stroke-width="1.5"/><path d="M2.5 8 C6 7 8 5 9 2.5 M6 15.5 C7 11 11 9 15.5 9 M4 12 C7 10 10 6 11 2.5 M9 9 L13 15.5" stroke="#d4d4d4" stroke-width=".9" fill="none"/></svg>
<svg class="a" style="left:33px;top:283.6px;" width="18" height="18" viewBox="0 0 18 18"><defs><linearGradient id="tg"><stop offset="0" stop-color="#111"/><stop offset="1" stop-color="#e6e6e6"/></linearGradient></defs><rect x="2.5" y="3" width="13" height="12" fill="url(#tg)" stroke="#d4d4d4" stroke-width="1.2"/></svg>
<svg class="a" style="left:8.5px;top:303.6px;" width="18" height="18" viewBox="0 0 18 18"><path d="M3 15 L2.5 13.5 L10 6 L12 8 L4.5 15.5 Z" fill="none" stroke="#d4d4d4" stroke-width="1.2"/><path d="M10 4 L12 2 C13 1 14.5 1 15.5 2.5 C16.5 3.5 16.5 5 15.5 6 L13.5 8 Z" fill="#d4d4d4"/></svg>
<svg class="a" style="left:24.5px;top:318.6px;" width="4" height="4" viewBox="0 0 4 4"><path d="M4 0 L4 4 L0 4Z" fill="#cfcfcf"/></svg>
<svg class="a" style="left:33px;top:303.6px;" width="18" height="18" viewBox="0 0 18 18"><rect x="1.5" y="1.5" width="6" height="6" fill="#d4d4d4"/><circle cx="8" cy="8" r="3.5" fill="#9a9a9a"/><circle cx="12" cy="11.5" r="4.5" fill="#535353" stroke="#d4d4d4" stroke-width="1.2"/></svg>
<svg class="a" style="left:8.5px;top:323.8px;" width="18" height="18" viewBox="0 0 18 18"><g fill="#d4d4d4"><rect x="1" y="3" width="1.5" height="1.5"/><rect x="3.5" y="3" width="1.5" height="1.5"/><rect x="1" y="5.5" width="1.5" height="1.5"/><rect x="3.5" y="5.5" width="1.5" height="1.5"/><rect x="1" y="8" width="1.5" height="1.5"/></g><rect x="6.5" y="5" width="9" height="11" rx="1.5" fill="none" stroke="#d4d4d4" stroke-width="1.2"/><rect x="9" y="2" width="4" height="3" fill="#d4d4d4"/><circle cx="11" cy="10.5" r="2" fill="none" stroke="#d4d4d4" stroke-width="1.2"/></svg>
<svg class="a" style="left:24.5px;top:338.8px;" width="4" height="4" viewBox="0 0 4 4"><path d="M4 0 L4 4 L0 4Z" fill="#cfcfcf"/></svg>
<svg class="a" style="left:33px;top:323.8px;" width="18" height="18" viewBox="0 0 18 18"><path d="M2 2 V16 H16" fill="none" stroke="#d4d4d4" stroke-width="1.2"/><g fill="#d4d4d4"><rect x="4.5" y="8" width="2" height="7"/><rect x="8" y="4" width="2" height="11"/><rect x="11.5" y="6" width="2" height="9"/></g></svg>
<svg class="a" style="left:49px;top:338.8px;" width="4" height="4" viewBox="0 0 4 4"><path d="M4 0 L4 4 L0 4Z" fill="#cfcfcf"/></svg>
<svg class="a" style="left:8.5px;top:343.6px;" width="18" height="18" viewBox="0 0 18 18"><path d="M2 4.5 H6 M4.5 1.5 V6" stroke="#d4d4d4" stroke-width="1.2"/><path d="M5.5 6.5 H12 L15.5 10 V15.5 H5.5 Z" fill="#777" stroke="#d4d4d4" stroke-width="1.3"/></svg>
<svg class="a" style="left:24.5px;top:358.6px;" width="4" height="4" viewBox="0 0 4 4"><path d="M4 0 L4 4 L0 4Z" fill="#cfcfcf"/></svg>
<svg class="a" style="left:33px;top:343.6px;" width="18" height="18" viewBox="0 0 18 18"><path d="M3 16 L4.5 10 L12 2.5 L15.5 6 L8 13.5 Z" fill="none" stroke="#d4d4d4" stroke-width="1.2" stroke-width="1.3"/><path d="M12 2.5 L15.5 6 L14 7.5 L10.5 4Z" fill="#d4d4d4"/></svg>
<svg class="a" style="left:49px;top:358.6px;" width="4" height="4" viewBox="0 0 4 4"><path d="M4 0 L4 4 L0 4Z" fill="#cfcfcf"/></svg>
<svg class="a" style="left:8.5px;top:363.6px;" width="18" height="18" viewBox="0 0 18 18"><path d="M5 16 C3 14 1.5 11 1.5 9.5 C1.5 8.5 3 8.5 4 10 V3.5 C4 2.5 5.5 2.5 5.5 3.5 V8 V2.5 C5.5 1.5 7.5 1.5 7.5 2.5 V8 V2.8 C7.5 2 9.5 2 9.5 3 V8 V4 C9.5 3 11.5 3 11.5 4 V11 C12.5 9 14.5 8 15 9 C13.5 11 12.5 14 11 16 Z" fill="#d4d4d4"/></svg>
<svg class="a" style="left:24.5px;top:378.6px;" width="4" height="4" viewBox="0 0 4 4"><path d="M4 0 L4 4 L0 4Z" fill="#cfcfcf"/></svg>
<svg class="a" style="left:33px;top:363.6px;" width="18" height="18" viewBox="0 0 18 18"><circle cx="7" cy="7" r="5" fill="none" stroke="#d4d4d4" stroke-width="1.2" stroke-width="1.4"/><line x1="10.5" y1="10.5" x2="16" y2="16" stroke="#d4d4d4" stroke-width="1.6"/></svg>
<div class="a" style="left:20px;top:404px;width:30px;height:29px;background:#ffffff;"></div>
<div class="a" style="left:25px;top:409px;width:20px;height:19px;background:#5a5a5a;border:1px solid #222"></div>
<svg class="a" style="left:20px;top:404px;" width="30" height="29" viewBox="0 0 30 29"><line x1="1" y1="28.5" x2="29.5" y2="0.5" stroke="#ee1c24" stroke-width="2"/></svg>
<div class="a" style="left:5.5px;top:389px;width:29px;height:29px;background:#1b2034;border:1.5px solid #d0d0d0;box-shadow:inset 0 0 0 1px #111"></div>
<svg class="a" style="left:42px;top:389px;" width="10" height="10" viewBox="0 0 10 10"><path d="M2 3 C5 3 7 4 7 8" fill="none" stroke="#d4d4d4" stroke-width="1.3"/><path d="M0.5 3 L3 0.8 V5.2Z M7 9.5 L4.8 7 H9.2Z" fill="#d4d4d4"/></svg>
<svg class="a" style="left:4px;top:422px;" width="12" height="11" viewBox="0 0 12 11"><rect x="4" y="4" width="7" height="6.5" fill="#fff" stroke="#111" stroke-width="1"/><rect x="0.8" y="0.8" width="7" height="6.5" fill="#111" stroke="#d4d4d4" stroke-width="1.2"/></svg>
<div class="a" style="left:6px;top:439.5px;width:14px;height:15.5px;background:#303030;border-radius:2px"></div>
<div class="a" style="left:22px;top:439.5px;width:14px;height:15.5px;background:#4d4d4d;border-radius:2px"></div>
<div class="a" style="left:38.5px;top:439.5px;width:15px;height:15.5px;background:#4d4d4d;border-radius:2px"></div>
<div class="a" style="left:7.5px;top:442px;width:11px;height:10.5px;background:#1b2034;border:1px solid #111"></div>
<div class="a" style="left:24px;top:442px;width:10.5px;height:10.5px;background:linear-gradient(90deg,#6a2a78,#c03a90 55%,#f0b3b0);border:1px solid #222"></div>
<div class="a" style="left:40.5px;top:442px;width:11px;height:10.5px;background:#fff;border:1px solid #111"></div>
<svg class="a" style="left:40.5px;top:442px;" width="11" height="10.5" viewBox="0 0 11 10.5"><line x1="0.5" y1="10" x2="10.5" y2="0.5" stroke="#ee1c24" stroke-width="1.5"/></svg>
<div class="a" style="left:6px;top:459.5px;width:14px;height:14.5px;background:#303030;border-radius:2px"></div>
<div class="a" style="left:22px;top:459.5px;width:14px;height:14.5px;background:#4d4d4d;border-radius:2px"></div>
<div class="a" style="left:38.5px;top:459.5px;width:15px;height:14.5px;background:#4d4d4d;border-radius:2px"></div>
<svg class="a" style="left:8px;top:461px;" width="11" height="11" viewBox="0 0 11 11"><circle cx="5" cy="5.5" r="3.5" fill="none" stroke="#d4d4d4" stroke-width="1"/><rect x="5.5" y="6" width="4.5" height="4.5" fill="#d4d4d4"/></svg>
<svg class="a" style="left:24px;top:461px;" width="11" height="11" viewBox="0 0 11 11"><circle cx="5" cy="5.5" r="3.5" fill="none" stroke="#d4d4d4" stroke-width="1"/><rect x="5.5" y="6" width="4.5" height="4.5" fill="#d4d4d4"/></svg>
<svg class="a" style="left:40.5px;top:461px;" width="11" height="11" viewBox="0 0 11 11"><circle cx="5.5" cy="5.5" r="3.5" fill="none" stroke="#d4d4d4" stroke-width="1"/><path d="M5.5 5.5 H9 A3.5 3.5 0 0 1 5.5 9 Z" fill="#d4d4d4"/></svg>
<svg class="a" style="left:20px;top:481px;" width="20" height="15" viewBox="0 0 20 15"><rect x="6.5" y="0.7" width="12.5" height="9" fill="#777" stroke="#d4d4d4" stroke-width="1.2"/><rect x="0.7" y="5" width="12" height="9" fill="#6a6a6a" stroke="#d4d4d4" stroke-width="1.2"/><rect x="6.5" y="0.7" width="12.5" height="2" fill="#d4d4d4"/><rect x="0.7" y="5" width="12" height="2" fill="#d4d4d4"/></svg>
<svg class="a" style="left:23px;top:513px;" width="14" height="4" viewBox="0 0 14 4"><circle cx="2.3" cy="2" r="1.5" fill="#d4d4d4"/><circle cx="6.8" cy="2" r="1.5" fill="#d4d4d4"/><circle cx="11.3" cy="2" r="1.5" fill="#d4d4d4"/></svg>
<div class="t" style="left:4.5px;top:76.73px;font-size:8px;color:#bdbdbd;font-weight:normal;">‹‹</div>
<svg class="a" style="left:67.5px;top:84.8px;" width="7" height="7" viewBox="0 0 7 7"><path d="M1 1 L6 6 M6 1 L1 6" stroke="#d8d8d8" stroke-width="1.3"/></svg>
<div class="t" style="left:81.5px;top:83.68px;font-size:9px;color:#e6e6e6;font-weight:bold;letter-spacing:-0.085px">Saving Colors to&nbsp; the Swatches Panel.ai* @ 33.33 % (RGB/Preview)</div>
<svg class="a" style="left:945px;top:106px;" width="8" height="6" viewBox="0 0 8 6"><path d="M1 4.5 L4 1.5 L7 4.5" fill="none" stroke="#c0c0c0" stroke-width="1.1"/></svg>
<svg class="a" style="left:945px;top:659px;" width="8" height="6" viewBox="0 0 8 6"><path d="M1 1 L4 4 L7 1" fill="none" stroke="#c0c0c0" stroke-width="1.1"/></svg>
<div class="a" style="left:62px;top:669px;width:880px;height:12px;background:#4b4b4b;"></div>
<div class="a" style="left:65px;top:670px;width:41px;height:11px;background:#3f3f3f;border-radius:2px"></div>
<div class="t" style="left:66.5px;top:673.46px;font-size:9.5px;color:#e8e8e8;font-weight:normal;">33.33%</div>
<div class="a" style="left:107px;top:670px;width:14px;height:11px;background:#444;border-radius:2px"></div>
<svg class="a" style="left:110.5px;top:674.5px;" width="8" height="5.5" viewBox="0 0 8 5.5"><path d="M1 1 L4.0 4.5 L7 1" fill="none" stroke="#d0d0d0" stroke-width="1.2"/></svg>
<div class="a" style="left:122px;top:670px;width:34px;height:11px;background:#474747;border-radius:2px"></div>
<svg class="a" style="left:127px;top:671px;" width="30" height="10" viewBox="0 0 30 10"><path d="M1 1 V9" stroke="#6d6d6d" stroke-width="1.2"/><path d="M8 1 L3.5 5 L8 9Z M21 1 L16.5 5 L21 9Z" fill="#6d6d6d"/></svg>
<div class="a" style="left:156px;top:670px;width:34px;height:11px;background:#3f3f3f;border-radius:2px"></div>
<div class="t" style="left:160px;top:673.46px;font-size:9.5px;color:#e8e8e8;font-weight:normal;">1</div>
<div class="a" style="left:190px;top:670px;width:14px;height:11px;background:#444;border-radius:2px"></div>
<svg class="a" style="left:193.5px;top:674.5px;" width="8" height="5.5" viewBox="0 0 8 5.5"><path d="M1 1 L4.0 4.5 L7 1" fill="none" stroke="#d0d0d0" stroke-width="1.2"/></svg>
<div class="a" style="left:204px;top:670px;width:36px;height:11px;background:#474747;border-radius:2px"></div>
<svg class="a" style="left:211px;top:671px;" width="25" height="10" viewBox="0 0 25 10"><path d="M2 1 L6.5 5 L2 9Z M15 1 L19.5 5 L15 9Z" fill="#6d6d6d"/><path d="M21.5 1 V9" stroke="#6d6d6d" stroke-width="1.2"/></svg>
<div class="a" style="left:240px;top:669px;width:1px;height:12px;background:#444;"></div>
<div class="t" style="left:304px;top:673.46px;font-size:9.5px;color:#d0d0d0;font-weight:normal;">Selection</div>
<div class="a" style="left:407px;top:670px;width:14px;height:11px;background:#555;"></div>
<svg class="a" style="left:411px;top:672px;" width="6" height="8" viewBox="0 0 6 8"><path d="M1 0.5 L5.5 4 L1 7.5Z" fill="#d6d6d6"/></svg>
<div class="a" style="left:421px;top:670px;width:521px;height:11px;background:#474747;"></div>
<svg class="a" style="left:426px;top:672px;" width="6" height="8" viewBox="0 0 6 8"><path d="M5 0.5 L1.5 4 L5 7.5" fill="none" stroke="#a0a0a0" stroke-width="1"/></svg>
<div class="a" style="left:668px;top:670px;width:21px;height:11px;background:#5e5e5e;border-radius:6px"></div>
<svg class="a" style="left:932px;top:672px;" width="6" height="8" viewBox="0 0 6 8"><path d="M1 0.5 L4.5 4 L1 7.5" fill="none" stroke="#a0a0a0" stroke-width="1"/></svg>
<div class="a" style="left:942px;top:669px;width:14px;height:12px;background:#555555;"></div>
<div class="t" style="left:976px;top:76.60px;font-size:8.5px;color:#d0d0d0;font-weight:bold;">‹‹</div>
<div class="t" style="left:1187px;top:76.60px;font-size:8.5px;color:#d0d0d0;font-weight:bold;">››</div>
<div class="a" style="left:964px;top:89px;width:17px;height:3px;background:#3c3c3c;"></div>
<svg class="a" style="left:965px;top:100px;" width="17" height="12" viewBox="0 0 17 12"><path d="M8.5 0.5 C3.5 0.5 0.5 3.5 0.5 6.5 C0.5 9.5 2.5 11.5 5.5 11.5 C7.5 11.5 7.5 9.5 9.5 9.5 C12 9.5 12 11.5 14 11 C16 10.5 16.5 8.5 16.5 6.5 C16.5 3 13 0.5 8.5 0.5Z" fill="#d8d8d8"/><g fill="#535353"><circle cx="4" cy="5" r="1.2"/><circle cx="7.5" cy="3.2" r="1.2"/><circle cx="11.5" cy="3.5" r="1.2"/><circle cx="13.5" cy="6.8" r="1.2"/><circle cx="4.5" cy="8.3" r="1.1"/></g></svg>
<div class="a" style="left:966px;top:121px;width:14px;height:12px;background:conic-gradient(at 0% 100%,#1a1a1a 0deg,#555 40deg,#c8c8c8 90deg);border-radius:0 14px 0 0;border-left:1.5px solid #ddd"></div>
<div class="a" style="left:991px;top:86px;width:209px;height:23px;background:#434343;"></div>
<div class="a" style="left:991px;top:87px;width:47px;height:22px;background:#535353;"></div>
<svg class="a" style="left:994px;top:94px;" width="6" height="7" viewBox="0 0 6 7"><path d="M1 3 L3 1 L5 3 M1 4 L3 6 L5 4" fill="none" stroke="#9a9a9a" stroke-width=".9"/></svg>
<div class="t" style="left:1003px;top:92.81px;font-size:9.2px;color:#f0f0f0;font-weight:bold;letter-spacing:-0.05px">Stroke</div>
<svg class="a" style="left:1185.5px;top:95.5px;" width="9" height="8" viewBox="0 0 9 8"><g fill="#c4c4c4"><rect x="0" y="0" width="9" height="1.3"/><rect x="0" y="3" width="9" height="1.3"/><rect x="0" y="6" width="9" height="1.3"/></g></svg>
<div class="t" style="left:995px;top:118.96px;font-size:9.5px;color:#d8d8d8;font-weight:normal;letter-spacing:-0.1px">Weight:</div>
<div class="a" style="left:1028.5px;top:114.8px;width:80px;height:16.5px;background:#474747;border:1px solid #414141;border-radius:3px"></div>
<div class="a" style="left:1043px;top:114.8px;width:1px;height:16.5px;background:#404040;"></div>
<div class="a" style="left:1044px;top:116px;width:48px;height:14px;background:#434343;"></div>
<div class="a" style="left:1092.5px;top:114.8px;width:1px;height:16.5px;background:#404040;"></div>
<svg class="a" style="left:1031px;top:117px;" width="10" height="13" viewBox="0 0 10 13"><path d="M1.5 4 L4.5 1 L7.5 4 M1.5 8.5 L4.5 11.5 L7.5 8.5" fill="none" stroke="#d0d0d0" stroke-width="1.2"/></svg>
<svg class="a" style="left:1096.5px;top:121px;" width="9" height="6" viewBox="0 0 9 6"><path d="M1 1 L4.5 5 L8 1" fill="none" stroke="#d8d8d8" stroke-width="1.5"/></svg>
<div class="a" style="left:991px;top:136px;width:209px;height:3px;background:#3f3f3f;"></div>
<div class="a" style="left:991px;top:139px;width:209px;height:21px;background:#434343;"></div>
<div class="a" style="left:1038px;top:139px;width:34px;height:21px;background:#4a4a4a;border-right:1px solid #424242"></div>
<div class="a" style="left:1072px;top:139px;width:39px;height:21px;background:#4a4a4a;border-right:1px solid #424242"></div>
<div class="a" style="left:1111px;top:139px;width:54px;height:21px;background:#535353;"></div>
<div class="t" style="left:1038.5px;top:145.51px;font-size:9.2px;color:#bdbdbd;font-weight:bold;letter-spacing:-0.1px">Paragra</div>
<div class="t" style="left:1078px;top:145.51px;font-size:9.2px;color:#bdbdbd;font-weight:bold;letter-spacing:-0.1px">OpenTy</div>
<div class="t" style="left:1118px;top:145.51px;font-size:9.2px;color:#f2f2f2;font-weight:bold;letter-spacing:-0.25px">Swatches</div>
<div class="a" style="left:1182px;top:143px;width:15px;height:13px;background:#4a4a4a;border:1px solid #3e3e3e;border-radius:3px"></div>
<svg class="a" style="left:1185px;top:146px;" width="8.5" height="8" viewBox="0 0 8.5 8"><g fill="#c8c8c8"><rect x="0" y="0" width="8.5" height="1.3"/><rect x="0" y="3" width="8.5" height="1.3"/><rect x="0" y="6" width="8.5" height="1.3"/></g></svg>
<div class="a" style="left:1154px;top:166.5px;width:20px;height:19px;background:#4e4e4e;border:1px solid #4a4a4a;border-radius:3px"></div>
<svg class="a" style="left:1159px;top:171px;" width="10" height="10" viewBox="0 0 10 10"><g fill="#d0d0d0"><rect x="0" y="0" width="10" height="1.4"/><rect x="0" y="2.9" width="10" height="1.4"/><rect x="0" y="5.8" width="10" height="1.4"/><rect x="0" y="8.6" width="10" height="1.4"/></g></svg>
<div class="a" style="left:1175px;top:166.5px;width:19px;height:19px;background:#2e2e2e;border-radius:3px"></div>
<svg class="a" style="left:1179px;top:170.5px;" width="11" height="11" viewBox="0 0 11 11"><rect x="0" y="0" width="2.8" height="2.8" fill="#f0f0f0"/><rect x="0" y="4" width="2.8" height="2.8" fill="#f0f0f0"/><rect x="0" y="8" width="2.8" height="2.8" fill="#f0f0f0"/><rect x="4" y="0" width="2.8" height="2.8" fill="#f0f0f0"/><rect x="4" y="4" width="2.8" height="2.8" fill="#f0f0f0"/><rect x="4" y="8" width="2.8" height="2.8" fill="#f0f0f0"/><rect x="8" y="0" width="2.8" height="2.8" fill="#f0f0f0"/><rect x="8" y="4" width="2.8" height="2.8" fill="#f0f0f0"/><rect x="8" y="8" width="2.8" height="2.8" fill="#f0f0f0"/></svg>
<div class="a" style="left:1032px;top:194px;width:163px;height:109px;background:none;border:1px solid #5d5d5d;border-radius:2px"></div>
<svg class="a" style="left:1184px;top:198px;" width="9" height="6" viewBox="0 0 9 6"><path d="M1 5 L4.5 1.5 L8 5" fill="none" stroke="#6a6a6a" stroke-width="1"/></svg>
<div class="a" style="left:1031.0px;top:195.8px;width:10.8px;height:10.7px;background:#231f20;"></div>
<div class="a" style="left:1042.7px;top:195.8px;width:10.8px;height:10.7px;background:#de2027;"></div>
<div class="a" style="left:1054.4px;top:195.8px;width:10.8px;height:10.7px;background:#f5e733;"></div>
<div class="a" style="left:1066.1px;top:195.8px;width:10.8px;height:10.7px;background:#1ba651;"></div>
<div class="a" style="left:1077.8px;top:195.8px;width:10.8px;height:10.7px;background:#1db2eb;"></div>
<div class="a" style="left:1089.5px;top:195.8px;width:10.8px;height:10.7px;background:#2e3591;"></div>
<div class="a" style="left:1101.2px;top:195.8px;width:10.8px;height:10.7px;background:#eb168c;"></div>
<div class="a" style="left:1112.9px;top:195.8px;width:10.8px;height:10.7px;background:#be1e2d;"></div>
<div class="a" style="left:1124.6px;top:195.8px;width:10.8px;height:10.7px;background:#ee4036;"></div>
<div class="a" style="left:1136.3px;top:195.8px;width:10.8px;height:10.7px;background:#f15a2a;"></div>
<div class="a" style="left:1148.0px;top:195.8px;width:10.8px;height:10.7px;background:#f7941e;"></div>
<div class="a" style="left:1159.7px;top:195.8px;width:10.8px;height:10.7px;background:#fbb040;"></div>
<div class="a" style="left:1171.4px;top:195.8px;width:10.8px;height:10.7px;background:#f9ed32;"></div>
<div class="a" style="left:1031.0px;top:207.55px;width:10.8px;height:10.7px;background:#009444;"></div>
<div class="a" style="left:1042.7px;top:207.55px;width:10.8px;height:10.7px;background:#006838;"></div>
<div class="a" style="left:1054.4px;top:207.55px;width:10.8px;height:10.7px;background:#39b177;"></div>
<div class="a" style="left:1066.1px;top:207.55px;width:10.8px;height:10.7px;background:#1fa99e;"></div>
<div class="a" style="left:1077.8px;top:207.55px;width:10.8px;height:10.7px;background:#27aae1;"></div>
<div class="a" style="left:1089.5px;top:207.55px;width:10.8px;height:10.7px;background:#1c75bc;"></div>
<div class="a" style="left:1101.2px;top:207.55px;width:10.8px;height:10.7px;background:#2b3990;"></div>
<div class="a" style="left:1112.9px;top:207.55px;width:10.8px;height:10.7px;background:#262262;"></div>
<div class="a" style="left:1124.6px;top:207.55px;width:10.8px;height:10.7px;background:#662d91;"></div>
<div class="a" style="left:1136.3px;top:207.55px;width:10.8px;height:10.7px;background:#92278f;"></div>
<div class="a" style="left:1148.0px;top:207.55px;width:10.8px;height:10.7px;background:#9e1f63;"></div>
<div class="a" style="left:1159.7px;top:207.55px;width:10.8px;height:10.7px;background:#da1c5c;"></div>
<div class="a" style="left:1171.4px;top:207.55px;width:10.8px;height:10.7px;background:#ee2a7b;"></div>
<div class="a" style="left:1031.0px;top:219.3px;width:10.8px;height:10.7px;background:#603913;"></div>
<div class="a" style="left:1042.7px;top:219.3px;width:10.8px;height:10.7px;background:#c49a6c;"></div>
<div class="a" style="left:1054.4px;top:219.3px;width:10.8px;height:10.7px;background:#a97c50;"></div>
<div class="a" style="left:1066.1px;top:219.3px;width:10.8px;height:10.7px;background:#8b5e3c;"></div>
<div class="a" style="left:1077.8px;top:219.3px;width:10.8px;height:10.7px;background:#754c29;"></div>
<div class="a" style="left:1089.5px;top:219.3px;width:10.8px;height:10.7px;background:#603913;"></div>
<div class="a" style="left:1101.2px;top:219.3px;width:10.8px;height:10.7px;background:#3c2415;"></div>
<div class="a" style="left:1112.9px;top:219.3px;width:10.8px;height:10.7px;background:linear-gradient(90deg,#000,#fff 70%,#fff);"></div>
<div class="a" style="left:1124.6px;top:219.3px;width:10.8px;height:10.7px;background:linear-gradient(90deg,#fff200,#ef4136);"></div>
<div class="a" style="left:1136.3px;top:219.3px;width:10.8px;height:10.7px;background:linear-gradient(90deg,#3a8ed6,#cfe4f7);"></div>
<div class="a" style="left:1148.0px;top:219.3px;width:10.8px;height:10.7px;background:radial-gradient(circle,#000 18%,#fff 22%,#fff 38%,#000 45%);"></div>
<div class="a" style="left:1159.7px;top:219.3px;width:10.8px;height:10.7px;background:radial-gradient(circle,#2fa84f 25%,#d7eec0 55%,#3b9b3a 80%);"></div>
<div class="a" style="left:1171.4px;top:219.3px;width:10.8px;height:10.7px;background:repeating-linear-gradient(45deg,#8a5a3a 0 2px,#efe3d6 2px 4px);"></div>
<div class="a" style="left:1031.0px;top:244px;width:10.8px;height:10.8px;background:#535353;"></div>
<div class="a" style="left:1042.7px;top:244px;width:10.8px;height:10.8px;background:#6d6e71;"></div>
<div class="a" style="left:1054.4px;top:244px;width:10.8px;height:10.8px;background:#808285;"></div>
<div class="a" style="left:1066.1px;top:244px;width:10.8px;height:10.8px;background:#939598;"></div>
<div class="a" style="left:1077.8px;top:244px;width:10.8px;height:10.8px;background:#a7a9ac;"></div>
<div class="a" style="left:1089.5px;top:244px;width:10.8px;height:10.8px;background:#bcbec0;"></div>
<div class="a" style="left:1101.2px;top:244px;width:10.8px;height:10.8px;background:#d1d3d4;"></div>
<div class="a" style="left:1112.9px;top:244px;width:10.8px;height:10.8px;background:#e6e7e8;"></div>
<div class="a" style="left:1124.6px;top:244px;width:10.8px;height:10.8px;background:#f1f2f2;"></div>
<div class="a" style="left:1031.0px;top:257.6px;width:10.8px;height:10.6px;background:#f9ed32;"></div>
<div class="a" style="left:1042.7px;top:257.6px;width:10.8px;height:10.6px;background:#1ba651;"></div>
<div class="a" style="left:1054.4px;top:257.6px;width:10.8px;height:10.6px;background:#2e3592;"></div>
<div class="a" style="left:1066.1px;top:257.6px;width:10.8px;height:10.6px;background:#8e3f97;"></div>
<svg class="a" style="left:1042px;top:304px;" width="13" height="13" viewBox="0 0 13 13"><path d="M4 2 H11 V12 H4 V9" fill="none" stroke="#6c6c6c" stroke-width="1.1"/><path d="M0.5 7 H7 M5 4.8 L7.2 7 L5 9.2" fill="none" stroke="#6c6c6c" stroke-width="1.1"/></svg>
<svg class="a" style="left:1077px;top:304px;" width="14" height="13" viewBox="0 0 14 13"><rect x="0" y="0" width="2.6" height="2.6" fill="#d6d6d6"/><rect x="0" y="3.3" width="2.6" height="2.6" fill="#d6d6d6"/><rect x="0" y="6.6" width="2.6" height="2.6" fill="#d6d6d6"/><rect x="0" y="9.9" width="2.6" height="2.6" fill="#d6d6d6"/><rect x="3.3" y="0" width="2.6" height="2.6" fill="#d6d6d6"/><rect x="3.3" y="3.3" width="2.6" height="2.6" fill="#d6d6d6"/><rect x="3.3" y="6.6" width="2.6" height="2.6" fill="#d6d6d6"/><rect x="3.3" y="9.9" width="2.6" height="2.6" fill="#d6d6d6"/><rect x="6.6" y="0" width="2.6" height="2.6" fill="#d6d6d6"/><rect x="6.6" y="3.3" width="2.6" height="2.6" fill="#d6d6d6"/><rect x="6.6" y="9.9" width="2.6" height="2.6" fill="#d6d6d6"/><rect x="9.9" y="0" width="2.6" height="2.6" fill="#d6d6d6"/><rect x="9.9" y="3.3" width="2.6" height="2.6" fill="#d6d6d6"/><rect x="9.9" y="6.6" width="2.6" height="2.6" fill="#d6d6d6"/><rect x="9.9" y="9.9" width="2.6" height="2.6" fill="#d6d6d6"/><rect x="11.5" y="11.3" width="1.5" height="1.5" fill="#d6d6d6"/></svg>
<svg class="a" style="left:1100px;top:304px;" width="13" height="13" viewBox="0 0 13 13"><rect x="0.5" y="0.5" width="11" height="11" fill="none" stroke="#6c6c6c" stroke-width="1"/><rect x="3" y="3" width="6" height="6" fill="#6c6c6c"/></svg>
<svg class="a" style="left:1120px;top:304px;" width="15" height="13" viewBox="0 0 15 13"><path d="M0.5 2 H5.5 L7 3.5 H14.5 V12 H0.5Z" fill="#d6d6d6"/><path d="M0.5 4.5 H14.5" stroke="#535353" stroke-width=".8"/></svg>
<svg class="a" style="left:1143px;top:304px;" width="13" height="13" viewBox="0 0 13 13"><rect x="0.6" y="0.6" width="11.8" height="11.8" fill="none" stroke="#d6d6d6" stroke-width="1.2"/><path d="M6.5 3.5 V9.5 M3.5 6.5 H9.5" stroke="#d6d6d6" stroke-width="1.3"/></svg>
<svg class="a" style="left:1165px;top:303px;" width="12" height="14" viewBox="0 0 12 14"><path d="M0.5 2.5 H11.5 M4 2.5 V1 H8 V2.5 M1.8 3.5 L2.8 13 H9.2 L10.2 3.5" fill="none" stroke="#6c6c6c" stroke-width="1.1"/></svg>
<div class="a" style="left:991px;top:318px;width:209px;height:2px;background:#404040;"></div>
<div class="a" style="left:991px;top:319.5px;width:209px;height:23px;background:#434343;"></div>
<div class="a" style="left:1038px;top:320px;width:10.5px;height:22px;background:#505050;"></div>
<div class="a" style="left:1087.5px;top:320px;width:1px;height:22px;background:#414141;"></div>
<div class="a" style="left:1126.5px;top:320px;width:1px;height:22px;background:#414141;"></div>
<div class="a" style="left:1162.5px;top:320px;width:1px;height:22px;background:#414141;"></div>
<div class="t" style="left:1040px;top:326.61px;font-size:9.2px;color:#c6c6c6;font-weight:bold;">s</div>
<div class="t" style="left:1056.5px;top:326.61px;font-size:9.2px;color:#c6c6c6;font-weight:bold;letter-spacing:-0.2px">Librarie</div>
<div class="t" style="left:1095px;top:326.61px;font-size:9.2px;color:#c6c6c6;font-weight:bold;letter-spacing:-0.2px">Transfo</div>
<div class="t" style="left:1133.3px;top:326.61px;font-size:9.2px;color:#c6c6c6;font-weight:bold;letter-spacing:-0.2px">Align</div>
<div class="a" style="left:991px;top:342.3px;width:209px;height:3.5px;background:#3f3f3f;"></div>
<div class="a" style="left:991px;top:345.6px;width:209px;height:23.3px;background:#434343;"></div>
<div class="a" style="left:1038px;top:346px;width:11px;height:23px;background:#535353;"></div>
<div class="t" style="left:1040px;top:354.51px;font-size:9.2px;color:#e6e6e6;font-weight:bold;">r</div>
<svg class="a" style="left:1185.5px;top:354.5px;" width="9" height="8" viewBox="0 0 9 8"><g fill="#c4c4c4"><rect x="0" y="0" width="9" height="1.3"/><rect x="0" y="3" width="9" height="1.3"/><rect x="0" y="6" width="9" height="1.3"/></g></svg>
<div class="t" style="left:1038.5px;top:375.96px;font-size:9.5px;color:#d8d8d8;font-weight:normal;">es:</div>
<svg class="a" style="left:1034px;top:395px;" width="14" height="14" viewBox="0 0 14 14"><path d="M0.5 5 V13 H8" fill="none" stroke="#d2d2d2" stroke-width="1.1"/><path d="M4 4.5 H8.5 V9 H13 V13.5" fill="none" stroke="#d2d2d2" stroke-width="1.1"/></svg>
<svg class="a" style="left:1062px;top:395px;" width="14" height="14" viewBox="0 0 14 14"><rect x="0.6" y="0.6" width="8.5" height="8.5" fill="none" stroke="#d2d2d2" stroke-width="1.1"/><rect x="4.6" y="4.6" width="8.5" height="8.5" fill="none" stroke="#d2d2d2" stroke-width="1.1"/><rect x="4.6" y="4.6" width="4.5" height="4.5" fill="#d2d2d2"/></svg>
<svg class="a" style="left:1094px;top:395px;" width="14" height="14" viewBox="0 0 14 14"><rect x="0.5" y="0.5" width="9" height="9" fill="#d2d2d2"/><rect x="4.5" y="4.5" width="9" height="9" fill="#d2d2d2"/><rect x="4.5" y="4.5" width="5" height="5" fill="#3a3a3a"/></svg>
<div class="a" style="left:1122px;top:393.3px;width:64.6px;height:15.2px;background:#575757;border-radius:2px"></div>
<div class="t" style="left:1139.3px;top:396.78px;font-size:9px;color:#8c8c8c;font-weight:normal;">Expand</div>
<div class="t" style="left:1038.5px;top:418.96px;font-size:9.5px;color:#d8d8d8;font-weight:normal;">s:</div>
<svg class="a" style="left:1004px;top:437px;" width="14" height="14" viewBox="0 0 14 14"><rect x="4" y="0.5" width="9" height="9" fill="#d2d2d2"/><rect x="0.5" y="4.5" width="9" height="9" fill="#d2d2d2"/></svg>
<svg class="a" style="left:1035px;top:437px;" width="14" height="14" viewBox="0 0 14 14"><path d="M3 3 V0.5 H9" fill="none" stroke="#d2d2d2" stroke-width="1"/><rect x="4" y="4" width="9.5" height="9.5" fill="#d2d2d2"/></svg>
<svg class="a" style="left:1067px;top:437px;" width="14" height="14" viewBox="0 0 14 14"><rect x="0.5" y="0.5" width="9" height="9" fill="#d2d2d2"/><rect x="4" y="4" width="9.5" height="9.5" fill="#d2d2d2" stroke="#535353" stroke-width=".6"/></svg>
<svg class="a" style="left:1100px;top:437px;" width="14" height="14" viewBox="0 0 14 14"><rect x="0.6" y="0.6" width="9" height="9" fill="none" stroke="#d2d2d2" stroke-width="1.1"/><rect x="4" y="4" width="9.4" height="9.4" fill="none" stroke="#d2d2d2" stroke-width="1.1"/><rect x="4" y="4" width="5.6" height="5.6" fill="#d2d2d2"/></svg>
<svg class="a" style="left:1132px;top:437px;" width="14" height="14" viewBox="0 0 14 14"><rect x="0.6" y="0.6" width="9" height="9" fill="none" stroke="#d2d2d2" stroke-width="1.1"/><rect x="4" y="4" width="9.4" height="9.4" fill="none" stroke="#d2d2d2" stroke-width="1.1"/><circle cx="6.8" cy="6.8" r="2.4" fill="none" stroke="#d2d2d2" stroke-width="1"/></svg>
<svg class="a" style="left:1164px;top:437px;" width="14" height="14" viewBox="0 0 14 14"><rect x="0.6" y="0.6" width="9" height="9" fill="#444" stroke="#d2d2d2" stroke-width="1.1"/><rect x="4" y="10" width="9.5" height="3.5" fill="#d2d2d2"/><rect x="10" y="4" width="3.5" height="9.5" fill="#d2d2d2"/></svg>
<div class="a" style="left:991px;top:459px;width:209px;height:3px;background:#3f3f3f;"></div>
<div class="a" style="left:991px;top:461.8px;width:209px;height:21.6px;background:#434343;"></div>
<div class="a" style="left:991.3px;top:462px;width:42px;height:21.4px;background:#535353;"></div>
<div class="a" style="left:1101.9px;top:462px;width:1px;height:21.4px;background:#414141;"></div>
<div class="a" style="left:1160.3px;top:462px;width:1px;height:21.4px;background:#414141;"></div>
<div class="t" style="left:998.4px;top:468.01px;font-size:9.2px;color:#f0f0f0;font-weight:bold;letter-spacing:-0.2px">Layers</div>
<div class="t" style="left:1040.8px;top:468.01px;font-size:9.2px;color:#c6c6c6;font-weight:bold;letter-spacing:-0.05px">Asset Export</div>
<div class="t" style="left:1109.9px;top:468.01px;font-size:9.2px;color:#c6c6c6;font-weight:bold;letter-spacing:-0.15px">Artboards</div>
<svg class="a" style="left:1185.5px;top:469px;" width="9" height="8" viewBox="0 0 9 8"><g fill="#c4c4c4"><rect x="0" y="0" width="9" height="1.3"/><rect x="0" y="3" width="9" height="1.3"/><rect x="0" y="6" width="9" height="1.3"/></g></svg>
<div class="a" style="left:995.8px;top:489.5px;width:198.5px;height:177px;background:#535353;border:1px solid #5c5c5c"></div>
<div class="a" style="left:996.5px;top:506.9px;width:197px;height:1px;background:#4a4a4a;"></div>
<div class="a" style="left:1012.8px;top:489.9px;width:1px;height:17.5px;background:#4a4a4a;"></div>
<div class="a" style="left:1164.5px;top:489.9px;width:1px;height:17.5px;background:#4a4a4a;"></div>
<svg class="a" style="left:998px;top:494.9px;" width="12" height="8" viewBox="0 0 12 8"><path d="M0.5 4 C3 0.5 9 0.5 11.5 4 C9 7.5 3 7.5 0.5 4Z" fill="#d8d8d8"/><circle cx="6" cy="4" r="1.8" fill="#535353"/><circle cx="6" cy="4" r=".8" fill="#d8d8d8"/></svg>
<div class="a" style="left:1032px;top:491.9px;width:2.5px;height:13.5px;background:#4f86ee;"></div>
<svg class="a" style="left:1040.5px;top:496.9px;" width="8" height="5.5" viewBox="0 0 8 5.5"><path d="M1 1 L4.0 4.5 L7 1" fill="none" stroke="#d8d8d8" stroke-width="1.2"/></svg>
<div class="a" style="left:1056px;top:491.9px;width:14.5px;height:13.5px;background:#1b2032;border:1px solid #777"></div>
<div class="a" style="left:1058px;top:494.9px;width:10px;height:2px;background:#c8c8d8;"></div>
<div class="a" style="left:1058px;top:497.9px;width:7px;height:1px;background:#9a9aaa;"></div>
<div class="a" style="left:1057px;top:501.9px;width:12.5px;height:2px;background:linear-gradient(90deg,#6a2c78,#f0a898);"></div>
<div class="t" style="left:1074.7px;top:494.41px;font-size:9.2px;color:#e8e8e8;font-weight:normal;">Layer 1</div>
<svg class="a" style="left:1169px;top:493.9px;" width="10" height="10" viewBox="0 0 10 10"><circle cx="4.5" cy="4.5" r="3.6" fill="none" stroke="#c8c8c8" stroke-width="1"/></svg>
<div class="a" style="left:1182px;top:495.9px;width:5.5px;height:5.5px;background:#4a86f0;border:1px solid #222"></div>
<svg class="a" style="left:1187px;top:490.4px;" width="6" height="6" viewBox="0 0 6 6"><path d="M0 0 H6 V6Z" fill="#d8d8d8"/></svg>
<div class="a" style="left:996.5px;top:524.4px;width:197px;height:1px;background:#4a4a4a;"></div>
<div class="a" style="left:1012.8px;top:507.4px;width:1px;height:17.5px;background:#4a4a4a;"></div>
<div class="a" style="left:1164.5px;top:507.4px;width:1px;height:17.5px;background:#4a4a4a;"></div>
<svg class="a" style="left:998px;top:512.4px;" width="12" height="8" viewBox="0 0 12 8"><path d="M0.5 4 C3 0.5 9 0.5 11.5 4 C9 7.5 3 7.5 0.5 4Z" fill="#d8d8d8"/><circle cx="6" cy="4" r="1.8" fill="#535353"/><circle cx="6" cy="4" r=".8" fill="#d8d8d8"/></svg>
<div class="a" style="left:1032px;top:509.4px;width:2.5px;height:13.5px;background:#4f86ee;"></div>
<div class="a" style="left:1075.4px;top:509.4px;width:14.6px;height:13.5px;background:#fff;border:1px solid #2a2a2a;border-radius:1px"></div>
<div class="t" style="left:1094.2px;top:511.91px;font-size:9.2px;color:#e8e8e8;font-weight:normal;">Saving C...</div>
<svg class="a" style="left:1169px;top:511.4px;" width="10" height="10" viewBox="0 0 10 10"><circle cx="4.5" cy="4.5" r="3.6" fill="none" stroke="#c8c8c8" stroke-width="1"/></svg>
<div class="a" style="left:996.5px;top:541.9px;width:197px;height:1px;background:#4a4a4a;"></div>
<div class="a" style="left:1012.8px;top:524.9px;width:1px;height:17.5px;background:#4a4a4a;"></div>
<div class="a" style="left:1164.5px;top:524.9px;width:1px;height:17.5px;background:#4a4a4a;"></div>
<svg class="a" style="left:998px;top:529.9px;" width="12" height="8" viewBox="0 0 12 8"><path d="M0.5 4 C3 0.5 9 0.5 11.5 4 C9 7.5 3 7.5 0.5 4Z" fill="#d8d8d8"/><circle cx="6" cy="4" r="1.8" fill="#535353"/><circle cx="6" cy="4" r=".8" fill="#d8d8d8"/></svg>
<div class="a" style="left:1032px;top:526.9px;width:2.5px;height:13.5px;background:#4f86ee;"></div>
<div class="a" style="left:1075.4px;top:526.9px;width:14.6px;height:13.5px;background:#fff;border:1px solid #2a2a2a;border-radius:1px"></div>
<div class="t" style="left:1094.2px;top:529.41px;font-size:9.2px;color:#e8e8e8;font-weight:normal;">Line</div>
<svg class="a" style="left:1169px;top:528.9px;" width="10" height="10" viewBox="0 0 10 10"><circle cx="4.5" cy="4.5" r="3.6" fill="none" stroke="#c8c8c8" stroke-width="1"/></svg>
<div class="a" style="left:996.5px;top:559.4px;width:197px;height:1px;background:#4a4a4a;"></div>
<div class="a" style="left:1012.8px;top:542.4px;width:1px;height:17.5px;background:#4a4a4a;"></div>
<div class="a" style="left:1164.5px;top:542.4px;width:1px;height:17.5px;background:#4a4a4a;"></div>
<svg class="a" style="left:998px;top:547.4px;" width="12" height="8" viewBox="0 0 12 8"><path d="M0.5 4 C3 0.5 9 0.5 11.5 4 C9 7.5 3 7.5 0.5 4Z" fill="#d8d8d8"/><circle cx="6" cy="4" r="1.8" fill="#535353"/><circle cx="6" cy="4" r=".8" fill="#d8d8d8"/></svg>
<div class="a" style="left:1032px;top:544.4px;width:2.5px;height:13.5px;background:#4f86ee;"></div>
<div class="a" style="left:1075.4px;top:544.4px;width:14.6px;height:13.5px;background:#fff;border:1px solid #2a2a2a;border-radius:1px"></div>
<div class="t" style="left:1094.2px;top:546.91px;font-size:9.2px;color:#e8e8e8;font-weight:normal;">Backgro...</div>
<svg class="a" style="left:1169px;top:546.4px;" width="10" height="10" viewBox="0 0 10 10"><circle cx="4.5" cy="4.5" r="3.6" fill="none" stroke="#c8c8c8" stroke-width="1"/></svg>
<div class="a" style="left:996.5px;top:576.9px;width:197px;height:1px;background:#4a4a4a;"></div>
<div class="a" style="left:1012.8px;top:559.9px;width:1px;height:17.5px;background:#4a4a4a;"></div>
<div class="a" style="left:1164.5px;top:559.9px;width:1px;height:17.5px;background:#4a4a4a;"></div>
<svg class="a" style="left:998px;top:564.9px;" width="12" height="8" viewBox="0 0 12 8"><path d="M0.5 4 C3 0.5 9 0.5 11.5 4 C9 7.5 3 7.5 0.5 4Z" fill="#d8d8d8"/><circle cx="6" cy="4" r="1.8" fill="#535353"/><circle cx="6" cy="4" r=".8" fill="#d8d8d8"/></svg>
<div class="a" style="left:1032px;top:561.9px;width:2.5px;height:13.5px;background:#4f86ee;"></div>
<div class="a" style="left:1075.4px;top:561.9px;width:14.6px;height:13.5px;background:#fff;border:1px solid #2a2a2a;border-radius:1px"></div>
<div class="t" style="left:1094.2px;top:564.41px;font-size:9.2px;color:#e8e8e8;font-weight:normal;">Gradient</div>
<svg class="a" style="left:1169px;top:563.9px;" width="10" height="10" viewBox="0 0 10 10"><circle cx="4.5" cy="4.5" r="3.6" fill="none" stroke="#c8c8c8" stroke-width="1"/></svg>
<div class="a" style="left:1077px;top:533.4px;width:11px;height:1px;background:#e0c0d0;"></div>
<div class="a" style="left:1076.4px;top:545.4px;width:12.6px;height:11.5px;background:#1b2032;"></div>
<div class="a" style="left:1076.4px;top:545.4px;width:12.6px;height:1.5px;background:#ddd;"></div>
<div class="a" style="left:1076.4px;top:554.9px;width:12.6px;height:1.5px;background:#ddd;"></div>
<svg class="a" style="left:1167px;top:544.4px;" width="14" height="14" viewBox="0 0 14 14"><circle cx="6.5" cy="6.5" r="5.5" fill="none" stroke="#c8c8c8" stroke-width="1"/><circle cx="6.5" cy="6.5" r="3.5" fill="none" stroke="#c8c8c8" stroke-width="1"/></svg>
<div class="a" style="left:1181px;top:547.4px;width:7.5px;height:7.5px;background:#4a86f0;border:1.2px solid #1a1a1a"></div>
<div class="a" style="left:1076.4px;top:567.4px;width:12.6px;height:2.5px;background:linear-gradient(90deg,#3a2050,#b33389 50%,#f0a080);"></div>
<div class="t" style="left:995.5px;top:670.88px;font-size:9px;color:#e0e0e0;font-weight:normal;">1 Layer</div>
<svg class="a" style="left:1057px;top:671px;" width="12" height="12" viewBox="0 0 12 12"><path d="M6 1 H11 V6 M11 1 L5 7 M8 11 H1 V4 H4" fill="none" stroke="#6c6c6c" stroke-width="1.1"/></svg>
<svg class="a" style="left:1079px;top:670px;" width="12" height="12" viewBox="0 0 12 12"><circle cx="5" cy="5" r="3.8" fill="none" stroke="#d6d6d6" stroke-width="1.3"/><line x1="7.8" y1="7.8" x2="11" y2="11" stroke="#d6d6d6" stroke-width="1.5"/></svg>
<svg class="a" style="left:1099px;top:671px;" width="12" height="12" viewBox="0 0 12 12"><rect x=".5" y=".5" width="8" height="8" fill="none" stroke="#6c6c6c"/><rect x="3" y="3" width="8" height="8" fill="#6c6c6c"/></svg>
<svg class="a" style="left:1120px;top:671px;" width="15" height="12" viewBox="0 0 15 12"><path d="M0.5 3 H4 L6 5 M4 0.5 L6 3" fill="none" stroke="#6c6c6c"/><rect x="6.5" y="1.5" width="8" height="9" fill="none" stroke="#6c6c6c"/><path d="M10.5 4 V8 M8.5 6 H12.5" stroke="#6c6c6c"/></svg>
<svg class="a" style="left:1144px;top:670px;" width="13" height="13" viewBox="0 0 13 13"><rect x="0.6" y="0.6" width="11.5" height="11.5" fill="none" stroke="#d6d6d6" stroke-width="1.2"/><path d="M6.3 3.5 V9.2 M3.5 6.3 H9.2" stroke="#d6d6d6" stroke-width="1.3"/></svg>
<svg class="a" style="left:1165px;top:670px;" width="12" height="13" viewBox="0 0 12 13"><path d="M0.5 2.5 H11.5 M4 2.5 V1 H8 V2.5 M1.8 3.5 L2.8 12.5 H9.2 L10.2 3.5" fill="none" stroke="#6c6c6c" stroke-width="1.1"/></svg>
<div class="a" style="left:780px;top:132.5px;width:258px;height:314px;background:#535353;border-radius:4px;box-shadow:0 0 0 0.5px #3a3a3a,0 6px 18px rgba(0,0,0,0.45)"></div>
<div class="a" style="left:780px;top:132.5px;width:258px;height:18.3px;background:linear-gradient(#e3e3e3,#c8c8c8);border-radius:4px 4px 0 0"></div>
<div class="a" style="left:780px;top:150.5px;width:258px;height:0.8px;background:#8a8a8a;"></div>
<div class="t" style="left:876.8px;top:136.59px;font-size:11px;color:#202020;font-weight:normal;">New Swatch</div>
<div class="t" style="left:791.5px;top:173.29px;font-size:11px;color:#e2e2e2;font-weight:normal;letter-spacing:-0.2px">Swatch Name:</div>
<div class="a" style="left:863.2px;top:169.2px;width:162.3px;height:17.2px;background:#fff;border:1.5px solid #5c9be6;border-radius:3px;box-shadow:0 0 0 1px rgba(92,155,230,0.35)"></div>
<div class="a" style="left:868px;top:172.3px;width:111px;height:11.2px;background:#b2d6fd;"></div>
<div class="t" style="left:867.5px;top:172.99px;font-size:11px;color:#2a2a2a;font-weight:normal;letter-spacing:-0.07px">Blue Background Color</div>
<div class="t" style="left:804.5px;top:198.59px;font-size:11px;color:#e2e2e2;font-weight:normal;letter-spacing:-0.15px">Color Type:</div>
<div class="a" style="left:863.8px;top:195.4px;width:161.4px;height:16.5px;background:#4a4a4a;border:1px solid #474747;border-radius:3px"></div>
<div class="t" style="left:868.5px;top:198.39px;font-size:11px;color:#f4f4f4;font-weight:normal;letter-spacing:-0.3px;-webkit-text-stroke:0.25px #f4f4f4">Process Color</div>
<svg class="a" style="left:1013.5px;top:201.5px;" width="9" height="6" viewBox="0 0 9 6"><path d="M1 1 L4.5 5 L8 1" fill="none" stroke="#e0e0e0" stroke-width="1.3"/></svg>
<div class="a" style="left:864.1px;top:221.9px;width:10.1px;height:9.9px;background:#d4d4d4;border-radius:2px"></div>
<svg class="a" style="left:864.1px;top:221.9px;" width="10.1" height="9.9" viewBox="0 0 10.1 9.9"><path d="M2.2 5 L4.3 7.2 L8 2.5" fill="none" stroke="#333" stroke-width="1.4"/></svg>
<div class="t" style="left:878.4px;top:221.29px;font-size:11px;color:#f4f4f4;font-weight:normal;letter-spacing:-0.1px;-webkit-text-stroke:0.25px #f4f4f4">Global</div>
<div class="a" style="left:793.2px;top:250.6px;width:231.8px;height:112px;background:none;border:1px solid #5c5c5c;border-radius:3px"></div>
<div class="a" style="left:797px;top:245px;width:64px;height:14px;background:#535353;"></div>
<div class="t" style="left:800.8px;top:245.69px;font-size:11px;color:#e2e2e2;font-weight:normal;letter-spacing:-0.15px">Color Mode:</div>
<div class="a" style="left:863px;top:242.6px;width:154.3px;height:16px;background:#4a4a4a;border:1px solid #474747;border-radius:3px"></div>
<div class="t" style="left:867.8px;top:245.89px;font-size:11px;color:#f4f4f4;font-weight:normal;letter-spacing:-1px;-webkit-text-stroke:0.25px #f4f4f4">RGB</div>
<svg class="a" style="left:1005.5px;top:248.5px;" width="9" height="6" viewBox="0 0 9 6"><path d="M1 1 L4.5 5 L8 1" fill="none" stroke="#e0e0e0" stroke-width="1.3"/></svg>
<div class="a" style="left:800.5px;top:267.2px;width:25.7px;height:25.4px;background:#1b2032;border:1px solid #b8b8b8;border-radius:1px"></div>
<div class="t" style="left:835.2px;top:271.81px;font-size:10.5px;color:#e2e2e2;font-weight:normal;">R</div>
<div class="t" style="left:834.5px;top:299.51px;font-size:10.5px;color:#e2e2e2;font-weight:normal;">G</div>
<div class="t" style="left:835.2px;top:326.61px;font-size:10.5px;color:#e2e2e2;font-weight:normal;">B</div>
<div class="a" style="left:850.7px;top:274.8px;width:104.5px;height:3px;background:linear-gradient(90deg,#002033,#ff2033);"></div>
<div class="a" style="left:850.7px;top:301.8px;width:104.5px;height:3px;background:linear-gradient(90deg,#190033,#19ff33);"></div>
<div class="a" style="left:850.7px;top:329.5px;width:104.5px;height:3px;background:linear-gradient(90deg,#192000,#1920ff);"></div>
<svg class="a" style="left:856.3px;top:277.8px;" width="9" height="7" viewBox="0 0 9 7"><path d="M4.2 0.5 L8 3.8 V6.2 H0.5 V3.8 Z" fill="#d0d0d0" stroke="#777" stroke-width=".4"/></svg>
<svg class="a" style="left:859.3px;top:304.8px;" width="9" height="7" viewBox="0 0 9 7"><path d="M4.2 0.5 L8 3.8 V6.2 H0.5 V3.8 Z" fill="#d0d0d0" stroke="#777" stroke-width=".4"/></svg>
<svg class="a" style="left:867.6px;top:332.6px;" width="9" height="7" viewBox="0 0 9 7"><path d="M4.2 0.5 L8 3.8 V6.2 H0.5 V3.8 Z" fill="#d0d0d0" stroke="#777" stroke-width=".4"/></svg>
<div class="a" style="left:961.8px;top:267.5px;width:41.2px;height:16.6px;background:#454545;border:1px solid #4d4d4d;border-radius:2px"></div>
<div class="t" style="left:966px;top:271.29px;font-size:11px;color:#f4f4f4;font-weight:normal;-webkit-text-stroke:0.3px #f4f4f4">25</div>
<div class="a" style="left:961.8px;top:295.6px;width:41.2px;height:16.6px;background:#454545;border:1px solid #4d4d4d;border-radius:2px"></div>
<div class="t" style="left:966px;top:299.39px;font-size:11px;color:#f4f4f4;font-weight:normal;-webkit-text-stroke:0.3px #f4f4f4">32</div>
<div class="a" style="left:961.8px;top:323px;width:41.2px;height:16.6px;background:#454545;border:1px solid #4d4d4d;border-radius:2px"></div>
<div class="t" style="left:966px;top:326.79px;font-size:11px;color:#f4f4f4;font-weight:normal;-webkit-text-stroke:0.3px #f4f4f4">51</div>
<svg class="a" style="left:800px;top:304.5px;" width="12" height="12" viewBox="0 0 12 12"><path d="M6 1 L10.5 3.5 V8.5 L6 11 L1.5 8.5 V3.5Z M1.5 3.5 L6 6 L10.5 3.5 M6 6 V11" fill="none" stroke="#bcbcbc" stroke-width="1"/></svg>
<div class="a" style="left:813.2px;top:304px;width:12.9px;height:13.2px;background:#0e3e3b;border:1px solid #b0b0b0"></div>
<div class="a" style="left:868px;top:400.1px;width:77.1px;height:21.6px;background:none;border:1.5px solid #e8e8e8;border-radius:11px"></div>
<div class="t" style="left:891px;top:405.99px;font-size:11px;color:#f0f0f0;font-weight:normal;letter-spacing:-0.45px;-webkit-text-stroke:0.3px #f0f0f0">Cancel</div>
<div class="a" style="left:948.8px;top:400.1px;width:77.1px;height:21.6px;background:none;border:2.2px solid #f4f4f4;border-radius:11px"></div>
<div class="t" style="left:979.8px;top:405.99px;font-size:11px;color:#f4f4f4;font-weight:normal;-webkit-text-stroke:0.25px #f4f4f4">OK</div>
<div class="a" style="left:1199px;top:48px;width:1px;height:633px;background:#3a3a3a;"></div>
</body></html>
